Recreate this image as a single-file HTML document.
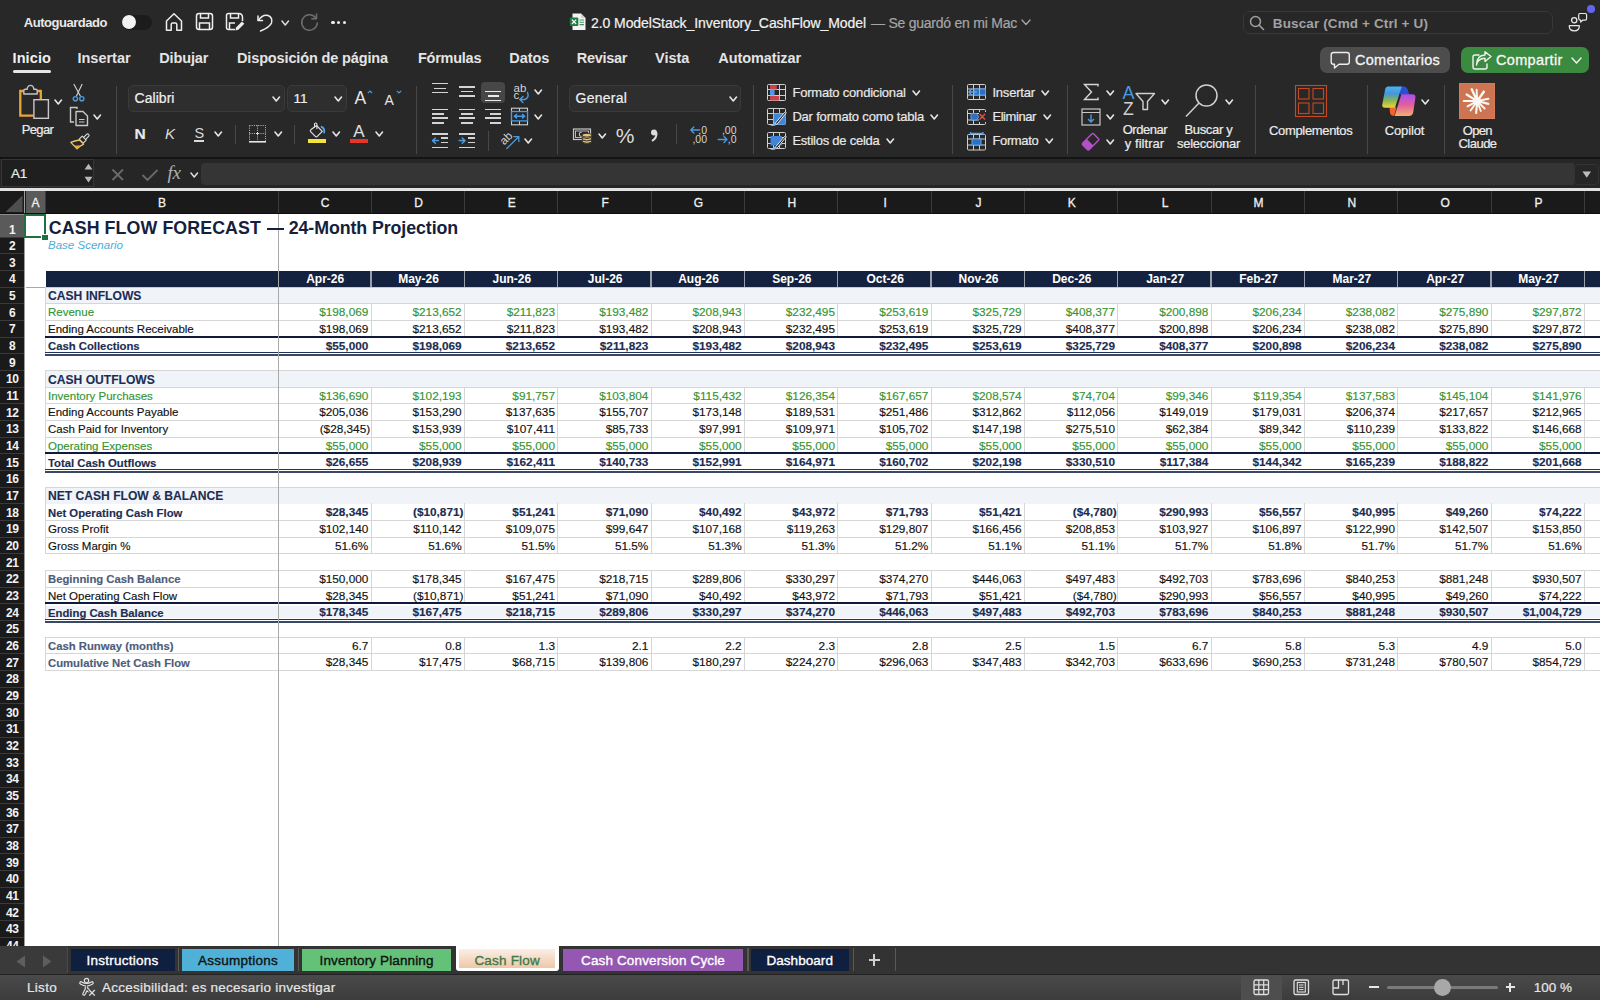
<!DOCTYPE html>
<html><head><meta charset="utf-8"><style>
html,body{margin:0;padding:0;width:1600px;height:1000px;overflow:hidden;background:#282828;}
body{position:relative;font-family:"Liberation Sans",sans-serif;}
.t{position:absolute;white-space:nowrap;font-family:"Liberation Sans",sans-serif;}
.r{position:absolute;}
.s{position:absolute;overflow:visible;}
</style></head><body>
<div class="r" style="left:0px;top:0px;width:1600px;height:157px;background:#282828;"></div>
<div class="t " style="top:16.00px;font-size:13px;line-height:13px;color:#e8e8e8;font-weight:bold;letter-spacing:-0.464px;left:23.75px;">Autoguardado</div>
<div class="r" style="left:122px;top:15px;width:30px;height:14.5px;background:#1c1c1c;border-radius:8px;"></div>
<div class="r" style="left:122.3px;top:15.2px;width:14px;height:14px;background:#f2f2f2;border-radius:50%;box-shadow:0 0 1px #000;"></div>
<svg class="s" style="left:164px;top:12px" width="20" height="20" viewBox="0 0 20 20"><path d="M2.5 18.2 V9 L10 1.8 L17.5 9 V18.2 H12.8 V12.5 Q12.8 11 11.3 11 H8.7 Q7.2 11 7.2 12.5 V18.2 Z" fill="none" stroke="#eee" stroke-width="1.5" stroke-linejoin="round"/></svg>
<svg class="s" style="left:195px;top:12px" width="19" height="19" viewBox="0 0 19 19"><rect x="1.5" y="1.5" width="16" height="16" rx="2.5" fill="none" stroke="#eee" stroke-width="1.5"/><path d="M5.5 1.8 V6 H13.5 V1.8" fill="none" stroke="#eee" stroke-width="1.5"/><path d="M4.5 17.2 V11 H14.5 V17.2" fill="none" stroke="#eee" stroke-width="1.5"/></svg>
<svg class="s" style="left:225px;top:12px" width="20" height="20" viewBox="0 0 20 20"><path d="M10 17.5 H3.5 Q1.5 17.5 1.5 15.5 V3.5 Q1.5 1.5 3.5 1.5 H13.5 Q17.5 1.5 17.5 5.5 V9" fill="none" stroke="#eee" stroke-width="1.5"/><path d="M5.5 1.8 V6 H13.5 V1.8" fill="none" stroke="#eee" stroke-width="1.5"/><path d="M4.5 17.2 V11 H10" fill="none" stroke="#eee" stroke-width="1.5"/><path d="M10.5 18.5 L11 15.5 L17 9.5 L19.3 11.8 L13.3 17.8 Z" fill="#eee"/></svg>
<svg class="s" style="left:256px;top:12px" width="18" height="20" viewBox="0 0 18 20"><path d="M2 4 V8.5 H6.5" fill="none" stroke="#eee" stroke-width="1.5" stroke-linecap="round" stroke-linejoin="round"/><path d="M2.3 8.2 Q7 2 12 3.5 Q17 5.5 15.5 11 Q14 15 4.5 19" fill="none" stroke="#eee" stroke-width="1.5" stroke-linecap="round"/></svg>
<svg class="s" style="left:281.25px;top:19.5px" width="8.5" height="6" viewBox="0 0 8.5 6"><path d="M1 1 L4.25 5 L7.5 1" fill="none" stroke="#ddd" stroke-width="1.5" stroke-linecap="round" stroke-linejoin="round"/></svg>
<svg class="s" style="left:299.5px;top:12.5px" width="19" height="19" viewBox="0 0 19 19"><path d="M15.5 4.5 A7.8 7.8 0 1 0 17.3 10" fill="none" stroke="#6e6e6e" stroke-width="1.5" stroke-linecap="round"/><path d="M16.5 1 V5.8 H11.8" fill="none" stroke="#6e6e6e" stroke-width="1.5" stroke-linecap="round" stroke-linejoin="round"/></svg>
<div class="r" style="left:331.4px;top:20.7px;width:3.2px;height:3.2px;background:#eee;border-radius:50%;"></div>
<div class="r" style="left:337.2px;top:20.7px;width:3.2px;height:3.2px;background:#eee;border-radius:50%;"></div>
<div class="r" style="left:343.0px;top:20.7px;width:3.2px;height:3.2px;background:#eee;border-radius:50%;"></div>
<svg class="s" style="left:569px;top:13px" width="18" height="18" viewBox="0 0 18 18"><path d="M3.5 0.5 H12 L16.5 5 V17 H3.5 Z" fill="#f4f4f4"/><path d="M12 0.5 V5 H16.5" fill="#d0d0d0"/><rect x="0.8" y="4.5" width="8.5" height="8.5" rx="1" fill="#1f7a45"/><path d="M2.9 6.6 L7.2 11 M7.2 6.6 L2.9 11" stroke="#fff" stroke-width="1.2"/><path d="M10.5 7 H15 M10.5 9.3 H15 M10.5 11.6 H15" stroke="#3c9a5e" stroke-width="1.1"/></svg>
<div class="t " style="top:15.55px;font-size:14px;line-height:14px;color:#f2f2f2;letter-spacing:-0.072px;-webkit-text-stroke:0.2px #f2f2f2;left:591.00px;">2.0 ModelStack_Inventory_CashFlow_Model</div>
<div class="t " style="top:15.55px;font-size:14px;line-height:14px;color:#a6a6a6;letter-spacing:-0.236px;-webkit-text-stroke:0.2px #a6a6a6;left:871.00px;">— Se guardó en mi Mac</div>
<svg class="s" style="left:1020.5px;top:18.75px" width="10" height="6.5" viewBox="0 0 10 6.5"><path d="M1 1 L5.0 5.5 L9 1" fill="none" stroke="#a6a6a6" stroke-width="1.3" stroke-linecap="round" stroke-linejoin="round"/></svg>
<div class="r" style="left:1242.5px;top:10.5px;width:310.5px;height:23px;background:#272727;border:1px solid #393939;border-radius:7px;box-sizing:border-box;"></div>
<svg class="s" style="left:1249px;top:15px" width="16" height="16" viewBox="0 0 16 16"><circle cx="6.5" cy="6.5" r="5" fill="none" stroke="#a0a0a0" stroke-width="1.5"/><path d="M10.2 10.2 L14.5 14.5" stroke="#a0a0a0" stroke-width="1.6" stroke-linecap="round"/></svg>
<div class="t " style="top:16.77px;font-size:13.5px;line-height:13.5px;color:#a2a2a2;font-weight:bold;letter-spacing:0.127px;left:1272.80px;">Buscar (Cmd + Ctrl + U)</div>
<svg class="s" style="left:1568px;top:11px" width="22" height="22" viewBox="0 0 22 22"><circle cx="6.2" cy="9.2" r="2.6" fill="none" stroke="#e8e8e8" stroke-width="1.3"/><path d="M1.3 14.6 H11.3 Q11.6 19.8 6.3 19.9 Q1 19.8 1.3 14.6 Z" fill="none" stroke="#e8e8e8" stroke-width="1.3" stroke-linejoin="round"/><path d="M11.8 2.5 H17.2 Q18.6 2.5 18.6 4 V7.6 Q18.6 9.2 17.2 9.2 H14.6 L12.7 11 L12.6 9.2 Q10.7 9.2 10.7 7.6 V4 Q10.7 2.5 11.8 2.5 Z" fill="none" stroke="#e8e8e8" stroke-width="1.2" stroke-linejoin="round"/></svg>
<div class="r" style="left:1587.2px;top:5px;width:7.6px;height:7.6px;background:#6464ee;border-radius:50%;"></div>
<div class="t " style="top:50.73px;font-size:14.5px;line-height:14.5px;color:#f0f0f0;font-weight:bold;letter-spacing:0.106px;left:12.50px;">Inicio</div>
<div class="t " style="top:50.73px;font-size:14.5px;line-height:14.5px;color:#e4e4e4;font-weight:bold;letter-spacing:-0.012px;left:77.50px;">Insertar</div>
<div class="t " style="top:50.73px;font-size:14.5px;line-height:14.5px;color:#e4e4e4;font-weight:bold;letter-spacing:-0.136px;left:159.25px;">Dibujar</div>
<div class="t " style="top:50.73px;font-size:14.5px;line-height:14.5px;color:#e4e4e4;font-weight:bold;letter-spacing:-0.137px;left:237.00px;">Disposición de página</div>
<div class="t " style="top:50.73px;font-size:14.5px;line-height:14.5px;color:#e4e4e4;font-weight:bold;letter-spacing:-0.252px;left:418.00px;">Fórmulas</div>
<div class="t " style="top:50.73px;font-size:14.5px;line-height:14.5px;color:#e4e4e4;font-weight:bold;letter-spacing:-0.057px;left:509.25px;">Datos</div>
<div class="t " style="top:50.73px;font-size:14.5px;line-height:14.5px;color:#e4e4e4;font-weight:bold;letter-spacing:-0.307px;left:576.75px;">Revisar</div>
<div class="t " style="top:50.73px;font-size:14.5px;line-height:14.5px;color:#e4e4e4;font-weight:bold;letter-spacing:-0.029px;left:655.00px;">Vista</div>
<div class="t " style="top:50.73px;font-size:14.5px;line-height:14.5px;color:#e4e4e4;font-weight:bold;letter-spacing:-0.094px;left:718.25px;">Automatizar</div>
<div class="r" style="left:12.5px;top:70px;width:38.5px;height:3px;background:#e6e6e6;border-radius:2px;"></div>
<div class="r" style="left:1320px;top:46.6px;width:129.7px;height:26.8px;background:#4d4d4d;border-radius:7px;"></div>
<svg class="s" style="left:1330px;top:51px" width="21" height="19" viewBox="0 0 21 19"><path d="M3.5 1.5 H17 Q19.3 1.5 19.3 3.8 V11 Q19.3 13.3 17 13.3 H9 L4.5 17 V13.3 H3.5 Q1.2 13.3 1.2 11 V3.8 Q1.2 1.5 3.5 1.5 Z" fill="none" stroke="#eee" stroke-width="1.4" stroke-linejoin="round"/></svg>
<div class="t " style="top:53.03px;font-size:14.5px;line-height:14.5px;color:#f4f4f4;letter-spacing:0.255px;-webkit-text-stroke:0.3px #f4f4f4;left:1355.00px;">Comentarios</div>
<div class="r" style="left:1461px;top:46.6px;width:128px;height:26.8px;background:#3a8a40;border-radius:7px;"></div>
<svg class="s" style="left:1471px;top:50.5px" width="22" height="20" viewBox="0 0 22 20"><path d="M8 4 H4 Q2 4 2 6 V16 Q2 18 4 18 H14 Q16 18 16 16 V13" fill="none" stroke="#f2f2f2" stroke-width="1.4" stroke-linecap="round"/><path d="M5.5 14 Q6.5 7.5 14 7.2 V10.5 L20 5.5 L14 0.8 V4 Q5.5 4.5 5.5 14 Z" fill="none" stroke="#f2f2f2" stroke-width="1.4" stroke-linejoin="round"/></svg>
<div class="t " style="top:53.03px;font-size:14.5px;line-height:14.5px;color:#f8f8f8;letter-spacing:0.328px;-webkit-text-stroke:0.3px #f8f8f8;left:1496.00px;">Compartir</div>
<svg class="s" style="left:1571.0px;top:57.0px" width="11" height="7" viewBox="0 0 11 7"><path d="M1 1 L5.5 6 L10 1" fill="none" stroke="#f2f2f2" stroke-width="1.4" stroke-linecap="round" stroke-linejoin="round"/></svg>
<svg class="s" style="left:17px;top:84px" width="36" height="37" viewBox="0 0 36 37"><path d="M6.8 7 H3.3 V31.6 H16.5" fill="none" stroke="#eaa53a" stroke-width="2.3"/><path d="M20.5 7 H23.8 V15.5" fill="none" stroke="#eaa53a" stroke-width="2.3"/><path d="M6.8 10 V6.6 Q6.8 5.3 8.2 5.3 H10.2 Q10.5 1.4 13.5 1.4 Q16.5 1.4 16.8 5.3 H18.8 Q20.2 5.3 20.2 6.6 V10 Z" fill="#282828" stroke="#c4c4c4" stroke-width="1.4" stroke-linejoin="round"/><rect x="16.9" y="15.7" width="14.5" height="18.6" fill="#282828" stroke="#c8c8c8" stroke-width="1.4"/></svg>
<svg class="s" style="left:53.75px;top:98.5px" width="8.5" height="6" viewBox="0 0 8.5 6"><path d="M1 1 L4.25 5 L7.5 1" fill="none" stroke="#e6e6e6" stroke-width="1.6" stroke-linecap="round" stroke-linejoin="round"/></svg>
<div class="t " style="top:123.00px;font-size:13px;line-height:13px;color:#ececec;letter-spacing:-0.638px;-webkit-text-stroke:0.2px #ececec;left:21.70px;">Pegar</div>
<svg class="s" style="left:71px;top:83px" width="16" height="20" viewBox="0 0 16 20"><path d="M2.8 1 L9.6 13.6 M11.2 1 L5.2 13.6" stroke="#d4d4d4" stroke-width="1.1"/><circle cx="4.4" cy="15.7" r="2.1" fill="#282828" stroke="#4a9be0" stroke-width="1.4"/><circle cx="10.8" cy="15.7" r="2.1" fill="#282828" stroke="#4a9be0" stroke-width="1.4"/></svg>
<svg class="s" style="left:69px;top:106px" width="20" height="21" viewBox="0 0 20 21"><path d="M8 3 V1.5 H1.5 V16 H5" fill="none" stroke="#c8c8c8" stroke-width="1.4"/><path d="M7 5.5 H14 L18.5 10 V19.5 H7 Z" fill="none" stroke="#c8c8c8" stroke-width="1.4" stroke-linejoin="round"/><path d="M10 13.5 H15.5 M10 16 H15.5" stroke="#c8c8c8" stroke-width="1.2"/></svg>
<svg class="s" style="left:93.45px;top:114.3px" width="8.5" height="6" viewBox="0 0 8.5 6"><path d="M1 1 L4.25 5 L7.5 1" fill="none" stroke="#e6e6e6" stroke-width="1.6" stroke-linecap="round" stroke-linejoin="round"/></svg>
<svg class="s" style="left:69px;top:131px" width="22" height="20" viewBox="0 0 22 20"><path d="M13.2 7.8 L17.6 3.4 Q18.6 2.4 19.6 3.4 Q20.6 4.4 19.6 5.4 L15.2 9.8" fill="none" stroke="#d8d8d8" stroke-width="1.2"/><path d="M10.2 8.2 L13.2 5.2 L17.2 9.2 L14.2 12.2 Z" fill="#282828" stroke="#d8d8d8" stroke-width="1.2" stroke-linejoin="round"/><path d="M10.5 9 Q5.5 9.8 1.8 11.4 L8 17.8 Q10.5 15.2 14.6 13.1 Z" fill="#282828" stroke="#f0c468" stroke-width="1.3" stroke-linejoin="round"/><path d="M4.8 14.5 L8 17.8 Q10 15.6 12.2 14.4 Z" fill="#e9a43c"/></svg>
<div class="r" style="left:116px;top:85.5px;width:1px;height:68.5px;background:#484848;"></div>
<div class="r" style="left:127.9px;top:85.3px;width:156.8px;height:26.8px;background:#2e2e2e;border:1px solid #3a3a3a;border-radius:5px;box-sizing:border-box;"></div>
<div class="t " style="top:91.15px;font-size:14px;line-height:14px;color:#f0f0f0;letter-spacing:0.046px;-webkit-text-stroke:0.2px #f0f0f0;left:134.50px;">Calibri</div>
<svg class="s" style="left:271.95px;top:96.0px" width="8.5" height="6" viewBox="0 0 8.5 6"><path d="M1 1 L4.25 5 L7.5 1" fill="none" stroke="#e6e6e6" stroke-width="1.6" stroke-linecap="round" stroke-linejoin="round"/></svg>
<div class="r" style="left:286.6px;top:85.3px;width:60.4px;height:26.8px;background:#2e2e2e;border:1px solid #3a3a3a;border-radius:5px;box-sizing:border-box;"></div>
<div class="t " style="top:91.57px;font-size:13.5px;line-height:13.5px;color:#f0f0f0;-webkit-text-stroke:0.2px #f0f0f0;left:293.50px;">11</div>
<svg class="s" style="left:334.25px;top:96.0px" width="8.5" height="6" viewBox="0 0 8.5 6"><path d="M1 1 L4.25 5 L7.5 1" fill="none" stroke="#e6e6e6" stroke-width="1.6" stroke-linecap="round" stroke-linejoin="round"/></svg>
<div class="t " style="top:89.79px;font-size:17.5px;line-height:17.5px;color:#e6e6e6;left:354.50px;">A</div>
<svg class="s" style="left:367px;top:90px" width="6" height="4" viewBox="0 0 6 4"><path d="M0.8 3.2 L3 1 L5.2 3.2" fill="none" stroke="#4a9be0" stroke-width="1.2"/></svg>
<div class="t " style="top:92.75px;font-size:14px;line-height:14px;color:#e6e6e6;left:384.50px;">A</div>
<svg class="s" style="left:396px;top:90px" width="6" height="4" viewBox="0 0 6 4"><path d="M0.8 0.8 L3 3 L5.2 0.8" fill="none" stroke="#4a9be0" stroke-width="1.2"/></svg>
<div class="t " style="top:125.58px;font-size:15.5px;line-height:15.5px;color:#e8e8e8;font-weight:bold;-webkit-text-stroke:0.2px #e8e8e8;left:134.50px;">N</div>
<div class="t " style="top:126.00px;font-size:15px;line-height:15px;color:#dadada;font-style:italic;left:165.00px;">K</div>
<div class="t " style="top:126.43px;font-size:14.5px;line-height:14.5px;color:#dadada;left:194.50px;">S</div>
<div class="r" style="left:194px;top:140.3px;width:9.5px;height:1.3px;background:#dadada;"></div>
<svg class="s" style="left:214.25px;top:131.3px" width="8.5" height="6" viewBox="0 0 8.5 6"><path d="M1 1 L4.25 5 L7.5 1" fill="none" stroke="#e6e6e6" stroke-width="1.6" stroke-linecap="round" stroke-linejoin="round"/></svg>
<div class="r" style="left:234.8px;top:124.5px;width:1px;height:19.5px;background:#484848;"></div>
<svg class="s" style="left:248px;top:124px" width="19" height="19" viewBox="0 0 19 19"><path d="M1.5 1.5 H17.5 V17.5 M1.5 1.5 V17.5 M9.5 1.5 V17.5 M1.5 9.5 H17.5" fill="none" stroke="#bdbdbd" stroke-width="1" stroke-dasharray="1 1.2"/><path d="M8 9.5 H11 M9.5 8 V11" stroke="#e0e0e0" stroke-width="1"/><path d="M1 17.8 H18" stroke="#e6e6e6" stroke-width="1.6"/></svg>
<svg class="s" style="left:273.75px;top:131.3px" width="8.5" height="6" viewBox="0 0 8.5 6"><path d="M1 1 L4.25 5 L7.5 1" fill="none" stroke="#e6e6e6" stroke-width="1.6" stroke-linecap="round" stroke-linejoin="round"/></svg>
<div class="r" style="left:294px;top:124.5px;width:1px;height:19.5px;background:#484848;"></div>
<svg class="s" style="left:307px;top:122px" width="20" height="17" viewBox="0 0 20 17"><path d="M9.5 3.5 L15.3 9.3 L10.3 14.3 Q9.3 15.3 8.3 14.3 L3.8 9.8 Q2.8 8.8 3.8 7.8 Z" fill="none" stroke="#e0e0e0" stroke-width="1.2" stroke-linejoin="round"/><path d="M7.5 5.5 V2.2 Q7.5 1 8.7 1 Q9.9 1 9.9 2.2 V7" fill="none" stroke="#e0e0e0" stroke-width="1.1"/><path d="M14.6 4.8 Q17.8 6 17.2 10.5" fill="none" stroke="#5aa5f0" stroke-width="1.8" stroke-linecap="round"/></svg>
<div class="r" style="left:307.6px;top:138.8px;width:18.4px;height:4.2px;background:#f4e33a;"></div>
<svg class="s" style="left:332.25px;top:131.3px" width="8.5" height="6" viewBox="0 0 8.5 6"><path d="M1 1 L4.25 5 L7.5 1" fill="none" stroke="#e6e6e6" stroke-width="1.6" stroke-linecap="round" stroke-linejoin="round"/></svg>
<div class="t " style="top:123.41px;font-size:17px;line-height:17px;color:#e0e0e0;left:353.20px;">A</div>
<div class="r" style="left:350.4px;top:138.8px;width:17.6px;height:4.2px;background:#e53628;"></div>
<svg class="s" style="left:374.75px;top:131.3px" width="8.5" height="6" viewBox="0 0 8.5 6"><path d="M1 1 L4.25 5 L7.5 1" fill="none" stroke="#e6e6e6" stroke-width="1.6" stroke-linecap="round" stroke-linejoin="round"/></svg>
<div class="r" style="left:416px;top:86px;width:1px;height:68px;background:#484848;"></div>
<div class="r" style="left:431.8px;top:82.95px;width:16.2px;height:1.5px;background:#d4d4d4;"></div>
<div class="r" style="left:434.4px;top:87.55px;width:11.4px;height:1.5px;background:#d4d4d4;"></div>
<div class="r" style="left:431.8px;top:91.95px;width:16.2px;height:1.5px;background:#d4d4d4;"></div>
<div class="r" style="left:458.9px;top:86.45px;width:15.8px;height:1.5px;background:#d4d4d4;"></div>
<div class="r" style="left:461px;top:90.85px;width:11.5px;height:1.5px;background:#d4d4d4;"></div>
<div class="r" style="left:458.9px;top:95.35px;width:15.8px;height:1.5px;background:#d4d4d4;"></div>
<div class="r" style="left:481.2px;top:81.5px;width:24.1px;height:21.9px;background:#474747;border-radius:4px;"></div>
<div class="r" style="left:485.2px;top:90.85px;width:16.2px;height:1.5px;background:#ececec;"></div>
<div class="r" style="left:487.8px;top:95.35px;width:11.4px;height:1.5px;background:#ececec;"></div>
<div class="r" style="left:485.2px;top:99.75px;width:16.2px;height:1.5px;background:#ececec;"></div>
<div class="t " style="top:82.77px;font-size:11.5px;line-height:11.5px;color:#d6d6d6;letter-spacing:0.104px;left:513.50px;">ab</div>
<div class="t " style="top:90.27px;font-size:11.5px;line-height:11.5px;color:#d6d6d6;left:513.50px;">c</div>
<svg class="s" style="left:518px;top:91px" width="12" height="13" viewBox="0 0 12 13"><path d="M9.5 1.5 Q11.5 6.5 7 8.5 H2 M5 5.5 L1.8 8.5 L5 11.5" fill="none" stroke="#4a9be0" stroke-width="1.4" stroke-linecap="round"/></svg>
<svg class="s" style="left:534.25px;top:89.4px" width="8.5" height="6" viewBox="0 0 8.5 6"><path d="M1 1 L4.25 5 L7.5 1" fill="none" stroke="#e6e6e6" stroke-width="1.6" stroke-linecap="round" stroke-linejoin="round"/></svg>
<div class="r" style="left:431.8px;top:108.55px;width:16.2px;height:1.5px;background:#d4d4d4;"></div>
<div class="r" style="left:458.9px;top:108.55px;width:15.8px;height:1.5px;background:#d4d4d4;"></div>
<div class="r" style="left:485.2px;top:108.55px;width:16.2px;height:1.5px;background:#d4d4d4;"></div>
<div class="r" style="left:431.8px;top:113.15px;width:11.8px;height:1.5px;background:#d4d4d4;"></div>
<div class="r" style="left:461px;top:113.15px;width:11.5px;height:1.5px;background:#d4d4d4;"></div>
<div class="r" style="left:490px;top:113.15px;width:11.4px;height:1.5px;background:#d4d4d4;"></div>
<div class="r" style="left:431.8px;top:117.45px;width:16.2px;height:1.5px;background:#d4d4d4;"></div>
<div class="r" style="left:458.9px;top:117.45px;width:15.8px;height:1.5px;background:#d4d4d4;"></div>
<div class="r" style="left:485.2px;top:117.45px;width:16.2px;height:1.5px;background:#d4d4d4;"></div>
<div class="r" style="left:431.8px;top:122.05px;width:11.8px;height:1.5px;background:#d4d4d4;"></div>
<div class="r" style="left:461px;top:122.05px;width:11.5px;height:1.5px;background:#d4d4d4;"></div>
<div class="r" style="left:490px;top:122.05px;width:11.4px;height:1.5px;background:#d4d4d4;"></div>
<svg class="s" style="left:510px;top:107px" width="20" height="19" viewBox="0 0 20 19"><rect x="1.5" y="1.2" width="16" height="16.6" fill="none" stroke="#cfcfcf" stroke-width="1.1"/><path d="M9.5 1.2 V4.5 M9.5 13.9 V17.8" stroke="#cfcfcf" stroke-width="1"/><rect x="1.5" y="4.5" width="16" height="9.4" fill="#282828" stroke="#4a9be0" stroke-width="1.3"/><path d="M4.5 9.2 H14.5 M7 7 L4.3 9.2 L7 11.4 M12 7 L14.7 9.2 L12 11.4" fill="none" stroke="#4a9be0" stroke-width="1.4" stroke-linejoin="round"/></svg>
<svg class="s" style="left:534.25px;top:114.0px" width="8.5" height="6" viewBox="0 0 8.5 6"><path d="M1 1 L4.25 5 L7.5 1" fill="none" stroke="#e6e6e6" stroke-width="1.6" stroke-linecap="round" stroke-linejoin="round"/></svg>
<div class="r" style="left:431.8px;top:133.05px;width:16.2px;height:1.5px;background:#d4d4d4;"></div>
<div class="r" style="left:441px;top:137.45px;width:7px;height:1.5px;background:#d4d4d4;"></div>
<div class="r" style="left:441px;top:141.95px;width:7px;height:1.5px;background:#d4d4d4;"></div>
<div class="r" style="left:431.8px;top:146.55px;width:16.2px;height:1.5px;background:#d4d4d4;"></div>
<div class="r" style="left:458.9px;top:133.05px;width:16.2px;height:1.5px;background:#d4d4d4;"></div>
<div class="r" style="left:468px;top:137.45px;width:6.7px;height:1.5px;background:#d4d4d4;"></div>
<div class="r" style="left:468px;top:141.95px;width:6.7px;height:1.5px;background:#d4d4d4;"></div>
<div class="r" style="left:458.9px;top:146.55px;width:16.2px;height:1.5px;background:#d4d4d4;"></div>
<svg class="s" style="left:431px;top:136px" width="9" height="9" viewBox="0 0 9 9"><path d="M7.5 4.6 H1.8 M4.4 2 L1.6 4.6 L4.4 7.2" fill="none" stroke="#4a9be0" stroke-width="1.5" stroke-linecap="round" stroke-linejoin="round"/></svg>
<svg class="s" style="left:458px;top:136px" width="9" height="9" viewBox="0 0 9 9"><path d="M1.2 4.6 H6.8 M4.2 2 L7 4.6 L4.2 7.2" fill="none" stroke="#4a9be0" stroke-width="1.5" stroke-linecap="round" stroke-linejoin="round"/></svg>
<div class="r" style="left:488px;top:131px;width:1px;height:19.5px;background:#484848;"></div>
<svg class="s" style="left:498px;top:128px" width="24" height="23" viewBox="0 0 24 23"><text x="0" y="0" transform="translate(6.2,17.5) rotate(-45)" font-family="Liberation Sans" font-size="11.5" fill="#d6d6d6">ab</text><path d="M8.8 20.5 L20.6 8.7 M15.8 8.6 H20.8 V13.6" fill="none" stroke="#4a9be0" stroke-width="1.3" stroke-linecap="round"/></svg>
<svg class="s" style="left:524.25px;top:138.0px" width="8.5" height="6" viewBox="0 0 8.5 6"><path d="M1 1 L4.25 5 L7.5 1" fill="none" stroke="#e6e6e6" stroke-width="1.6" stroke-linecap="round" stroke-linejoin="round"/></svg>
<div class="r" style="left:557px;top:85px;width:1px;height:69px;background:#484848;"></div>
<div class="r" style="left:569px;top:84.8px;width:172px;height:27.4px;background:#2e2e2e;border:1px solid #3a3a3a;border-radius:5px;box-sizing:border-box;"></div>
<div class="t " style="top:91.15px;font-size:14px;line-height:14px;color:#f0f0f0;letter-spacing:0.242px;-webkit-text-stroke:0.2px #f0f0f0;left:575.60px;">General</div>
<svg class="s" style="left:728.55px;top:95.5px" width="8.5" height="6" viewBox="0 0 8.5 6"><path d="M1 1 L4.25 5 L7.5 1" fill="none" stroke="#e6e6e6" stroke-width="1.6" stroke-linecap="round" stroke-linejoin="round"/></svg>
<svg class="s" style="left:572px;top:127px" width="22" height="18" viewBox="0 0 22 18"><rect x="1.5" y="2" width="17" height="10.5" fill="none" stroke="#c8c8c8" stroke-width="1.2"/><rect x="3.5" y="4" width="13" height="6.5" fill="none" stroke="#c8c8c8" stroke-width="0.9"/><path d="M9.8 5.3 Q7.3 5 7.3 7.3 Q7.3 9.4 9.8 9.2" fill="none" stroke="#c8c8c8" stroke-width="1.1"/><g stroke="#282828" stroke-width="0.9" fill="#e8c270"><path d="M10.2 13.2 V15.2 Q14.8 17.6 19.6 15.2 V13.2 Z"/><path d="M10.2 10.6 V12.8 Q14.8 15.2 19.6 12.8 V10.6 Z"/><path d="M10.2 8.2 V10.4 Q14.8 12.8 19.6 10.4 V8.2 Z"/><ellipse cx="14.9" cy="8.2" rx="4.7" ry="1.9"/></g></svg>
<svg class="s" style="left:598.25px;top:132.5px" width="8.5" height="6" viewBox="0 0 8.5 6"><path d="M1 1 L4.25 5 L7.5 1" fill="none" stroke="#e6e6e6" stroke-width="1.6" stroke-linecap="round" stroke-linejoin="round"/></svg>
<div class="t " style="top:125.02px;font-size:21px;line-height:21px;color:#dcdcdc;left:615.70px;">%</div>
<svg class="s" style="left:648.5px;top:128px" width="11" height="15" viewBox="0 0 11 15"><circle cx="5" cy="4.5" r="3" fill="#dcdcdc"/><path d="M7.5 4.5 Q8 10 3 13" fill="none" stroke="#dcdcdc" stroke-width="2"/></svg>
<div class="r" style="left:676px;top:124px;width:1px;height:20px;background:#484848;"></div>
<svg class="s" style="left:688.5px;top:125px" width="14" height="11" viewBox="0 0 14 11"><path d="M10.5 5 H1.8 M4.8 2 L1.8 5 L4.8 8" fill="none" stroke="#4a9be0" stroke-width="1.3" stroke-linecap="round" stroke-linejoin="round"/></svg>
<div class="t " style="top:124.61px;font-size:10.5px;line-height:10.5px;color:#d4d4d4;right:893.00px;">,0</div>
<div class="t " style="top:133.91px;font-size:10.5px;line-height:10.5px;color:#d4d4d4;right:893.00px;">,00</div>
<div class="t " style="top:124.61px;font-size:10.5px;line-height:10.5px;color:#d4d4d4;right:863.50px;">,00</div>
<svg class="s" style="left:717px;top:133.5px" width="13" height="11" viewBox="0 0 13 11"><path d="M1.2 5.5 H10 M7 2.5 L10 5.5 L7 8.5" fill="none" stroke="#4a9be0" stroke-width="1.3" stroke-linecap="round" stroke-linejoin="round"/></svg>
<div class="t " style="top:133.91px;font-size:10.5px;line-height:10.5px;color:#d4d4d4;right:863.50px;">,0</div>
<div class="r" style="left:752.9px;top:85px;width:1px;height:69px;background:#484848;"></div>
<svg class="s" style="left:767px;top:84px" width="20" height="19" viewBox="0 0 20 19"><rect x="0.5" y="0.5" width="18" height="16.0" rx="1" fill="none" stroke="#cfcfcf" stroke-width="1"/><path d="M6.5 0.5 V16.5 M12.5 0.5 V16.5 M0.5 5.5 H18.5 M0.5 11.5 H18.5" stroke="#cfcfcf" stroke-width="1"/><rect x="3" y="1" width="6.8" height="4.5" fill="#c9444a"/><rect x="3" y="6" width="4.6" height="5.5" fill="#4a9be0"/><rect x="3" y="12" width="9.2" height="4.5" fill="#c9444a"/></svg>
<div class="t " style="top:85.60px;font-size:13px;line-height:13px;color:#e8e8e8;letter-spacing:-0.203px;-webkit-text-stroke:0.2px #e8e8e8;left:792.40px;">Formato condicional</div>
<svg class="s" style="left:912.05px;top:89.5px" width="8.5" height="6" viewBox="0 0 8.5 6"><path d="M1 1 L4.25 5 L7.5 1" fill="none" stroke="#e6e6e6" stroke-width="1.6" stroke-linecap="round" stroke-linejoin="round"/></svg>
<svg class="s" style="left:767px;top:108px" width="20" height="19" viewBox="0 0 20 19"><rect x="0.5" y="0.5" width="18" height="16.0" rx="1" fill="none" stroke="#cfcfcf" stroke-width="1"/><path d="M6.5 0.5 V16.5 M12.5 0.5 V16.5 M0.5 5.5 H18.5 M0.5 11.5 H18.5" stroke="#cfcfcf" stroke-width="1"/><rect x="6.7" y="5.5" width="12" height="11.2" fill="#3f86d8"/><path d="M8 15.5 L17.5 4.5 Q18.8 3.5 19.3 4.8 L10 16.3 Z" fill="#282828" stroke="#e6e6e6" stroke-width="1"/><path d="M3 17.5 Q5.5 17.5 7.5 14.5 L9.5 16.5 Q7 19 3 17.5 Z" fill="#78b8f0"/></svg>
<div class="t " style="top:110.00px;font-size:13px;line-height:13px;color:#e8e8e8;letter-spacing:-0.192px;-webkit-text-stroke:0.2px #e8e8e8;left:792.40px;">Dar formato como tabla</div>
<svg class="s" style="left:930.25px;top:113.8px" width="8.5" height="6" viewBox="0 0 8.5 6"><path d="M1 1 L4.25 5 L7.5 1" fill="none" stroke="#e6e6e6" stroke-width="1.6" stroke-linecap="round" stroke-linejoin="round"/></svg>
<svg class="s" style="left:767px;top:132px" width="20" height="19" viewBox="0 0 20 19"><rect x="0.5" y="0.5" width="18" height="16.0" rx="1" fill="none" stroke="#cfcfcf" stroke-width="1"/><path d="M6.5 0.5 V16.5 M12.5 0.5 V16.5 M0.5 5.5 H18.5 M0.5 11.5 H18.5" stroke="#cfcfcf" stroke-width="1"/><rect x="3.5" y="4" width="11.5" height="9.5" fill="#3f86d8"/><path d="M8 15.5 L17.5 4.5 Q18.8 3.5 19.3 4.8 L10 16.3 Z" fill="#282828" stroke="#e6e6e6" stroke-width="1"/><path d="M3 17.5 Q5.5 17.5 7.5 14.5 L9.5 16.5 Q7 19 3 17.5 Z" fill="#78b8f0"/></svg>
<div class="t " style="top:134.40px;font-size:13px;line-height:13px;color:#e8e8e8;letter-spacing:-0.241px;-webkit-text-stroke:0.2px #e8e8e8;left:792.40px;">Estilos de celda</div>
<svg class="s" style="left:886.25px;top:138.3px" width="8.5" height="6" viewBox="0 0 8.5 6"><path d="M1 1 L4.25 5 L7.5 1" fill="none" stroke="#e6e6e6" stroke-width="1.6" stroke-linecap="round" stroke-linejoin="round"/></svg>
<div class="r" style="left:952.4px;top:85px;width:1px;height:69px;background:#484848;"></div>
<svg class="s" style="left:967px;top:84px" width="20" height="19" viewBox="0 0 20 19"><rect x="0.5" y="0.5" width="18" height="15.0" rx="1" fill="none" stroke="#cfcfcf" stroke-width="1"/><path d="M6.5 0.5 V15.5 M12.5 0.5 V15.5 M0.5 5 H18.5 M0.5 11 H18.5" stroke="#cfcfcf" stroke-width="1"/><rect x="7" y="5" width="11.5" height="6" fill="#2f6fc0" stroke="#5aa5f0" stroke-width="1"/><path d="M12.5 5 V11" stroke="#9cc8f5" stroke-width="0.8"/><path d="M9.5 8 H1.8 M4.6 5.2 L1.8 8 L4.6 10.8" fill="none" stroke="#5aa5f0" stroke-width="1.3" stroke-linecap="round" stroke-linejoin="round"/></svg>
<div class="t " style="top:85.60px;font-size:13px;line-height:13px;color:#e8e8e8;letter-spacing:-0.184px;-webkit-text-stroke:0.2px #e8e8e8;left:992.40px;">Insertar</div>
<svg class="s" style="left:1041.25px;top:89.5px" width="8.5" height="6" viewBox="0 0 8.5 6"><path d="M1 1 L4.25 5 L7.5 1" fill="none" stroke="#e6e6e6" stroke-width="1.6" stroke-linecap="round" stroke-linejoin="round"/></svg>
<svg class="s" style="left:967px;top:109px" width="20" height="19" viewBox="0 0 20 19"><rect x="0.5" y="0.5" width="18" height="15.0" rx="1" fill="none" stroke="#cfcfcf" stroke-width="1"/><path d="M6.5 0.5 V15.5 M12.5 0.5 V15.5 M0.5 4.5 H18.5 M0.5 11 H18.5" stroke="#cfcfcf" stroke-width="1"/><rect x="12" y="3" width="7.5" height="10" fill="#282828"/><path d="M4 4.5 H9.5 L11.8 7.8 L9.5 11 H4 Z" fill="#2f6fc0" stroke="#5aa5f0" stroke-width="1"/><path d="M12.5 5 L18 10.5 M18 5 L12.5 10.5" stroke="#e5534b" stroke-width="1.4"/></svg>
<div class="t " style="top:110.00px;font-size:13px;line-height:13px;color:#e8e8e8;letter-spacing:-0.419px;-webkit-text-stroke:0.2px #e8e8e8;left:992.40px;">Eliminar</div>
<svg class="s" style="left:1042.55px;top:113.8px" width="8.5" height="6" viewBox="0 0 8.5 6"><path d="M1 1 L4.25 5 L7.5 1" fill="none" stroke="#e6e6e6" stroke-width="1.6" stroke-linecap="round" stroke-linejoin="round"/></svg>
<svg class="s" style="left:967px;top:131px" width="20" height="19" viewBox="0 0 20 19"><rect x="0.5" y="3.5" width="18" height="15.5" rx="1" fill="none" stroke="#cfcfcf" stroke-width="1"/><path d="M6.5 3.5 V19 M12.5 3.5 V19 M0.5 8 H18.5 M0.5 14 H18.5" stroke="#cfcfcf" stroke-width="1"/><rect x="5" y="8" width="9" height="6" fill="#2f6fc0" stroke="#5aa5f0" stroke-width="1"/><path d="M3.5 2.5 H16 M3.5 1 V4 M16 1 V4" stroke="#5aa5f0" stroke-width="1.3"/></svg>
<div class="t " style="top:134.40px;font-size:13px;line-height:13px;color:#e8e8e8;letter-spacing:-0.343px;-webkit-text-stroke:0.2px #e8e8e8;left:992.40px;">Formato</div>
<svg class="s" style="left:1044.95px;top:138.3px" width="8.5" height="6" viewBox="0 0 8.5 6"><path d="M1 1 L4.25 5 L7.5 1" fill="none" stroke="#e6e6e6" stroke-width="1.6" stroke-linecap="round" stroke-linejoin="round"/></svg>
<div class="r" style="left:1067px;top:85px;width:1px;height:69px;background:#484848;"></div>
<svg class="s" style="left:1083px;top:83px" width="17" height="18" viewBox="0 0 17 18"><path d="M15 3.5 V1.5 H1.5 L8.5 9 L1.5 16.5 H15 V14.5" fill="none" stroke="#d6d6d6" stroke-width="1.4" stroke-linejoin="miter"/></svg>
<svg class="s" style="left:1105.55px;top:89.5px" width="8.5" height="6" viewBox="0 0 8.5 6"><path d="M1 1 L4.25 5 L7.5 1" fill="none" stroke="#e6e6e6" stroke-width="1.6" stroke-linecap="round" stroke-linejoin="round"/></svg>
<svg class="s" style="left:1081px;top:108px" width="20" height="18" viewBox="0 0 20 18"><rect x="1" y="1" width="18" height="16" fill="none" stroke="#c8c8c8" stroke-width="1.2"/><path d="M1 4.5 H19" stroke="#c8c8c8" stroke-width="1"/><path d="M10 6.5 V14 M7 11 L10 14 L13 11" fill="none" stroke="#4a9be0" stroke-width="1.4"/></svg>
<svg class="s" style="left:1105.55px;top:113.5px" width="8.5" height="6" viewBox="0 0 8.5 6"><path d="M1 1 L4.25 5 L7.5 1" fill="none" stroke="#e6e6e6" stroke-width="1.6" stroke-linecap="round" stroke-linejoin="round"/></svg>
<svg class="s" style="left:1081px;top:132px" width="20" height="19" viewBox="0 0 20 19"><path d="M2 11.5 L6.5 16 Q7.5 17 8.5 16 L17.5 7 Q18.5 6 17.5 5 L13 0.5" fill="none" stroke="#b54fc9" stroke-width="0"/><path d="M1.8 11 L10.8 2 Q11.8 1 12.8 2 L17.3 6.5 Q18.3 7.5 17.3 8.5 L8.3 17.5 Q7.3 18.5 6.3 17.5 L1.8 13 Q0.8 12 1.8 11 Z" fill="none" stroke="#b54fc9" stroke-width="1.5"/><path d="M1.8 11 L5.8 7 L12.3 13.5 L8.3 17.5 Q7.3 18.5 6.3 17.5 L1.8 13 Q0.8 12 1.8 11 Z" fill="#b54fc9"/></svg>
<svg class="s" style="left:1105.55px;top:138.5px" width="8.5" height="6" viewBox="0 0 8.5 6"><path d="M1 1 L4.25 5 L7.5 1" fill="none" stroke="#e6e6e6" stroke-width="1.6" stroke-linecap="round" stroke-linejoin="round"/></svg>
<div class="t " style="top:84.46px;font-size:18px;line-height:18px;color:#4a9be0;left:1122.50px;">A</div>
<div class="t " style="top:100.69px;font-size:17.5px;line-height:17.5px;color:#d0d0d0;left:1123.00px;">Z</div>
<svg class="s" style="left:1135px;top:92px" width="21" height="20" viewBox="0 0 21 20"><path d="M1 1.5 H19.5 L12.5 9.5 V17.5 H8 V9.5 Z" fill="none" stroke="#d0d0d0" stroke-width="1.4" stroke-linejoin="round"/></svg>
<svg class="s" style="left:1161.05px;top:98.5px" width="8.5" height="6" viewBox="0 0 8.5 6"><path d="M1 1 L4.25 5 L7.5 1" fill="none" stroke="#e6e6e6" stroke-width="1.6" stroke-linecap="round" stroke-linejoin="round"/></svg>
<div class="t " style="top:123.20px;font-size:13px;line-height:13px;color:#ececec;letter-spacing:-0.456px;-webkit-text-stroke:0.2px #ececec;left:1122.70px;">Ordenar</div>
<div class="t " style="top:136.70px;font-size:13px;line-height:13px;color:#ececec;letter-spacing:0.044px;-webkit-text-stroke:0.2px #ececec;left:1124.80px;">y filtrar</div>
<svg class="s" style="left:1184px;top:84px" width="35" height="35" viewBox="0 0 35 35"><circle cx="22.5" cy="11.5" r="10.5" fill="none" stroke="#d0d0d0" stroke-width="1.5"/><path d="M15 19 L2 32.5" stroke="#d0d0d0" stroke-width="1.5"/></svg>
<svg class="s" style="left:1224.55px;top:98.5px" width="8.5" height="6" viewBox="0 0 8.5 6"><path d="M1 1 L4.25 5 L7.5 1" fill="none" stroke="#e6e6e6" stroke-width="1.6" stroke-linecap="round" stroke-linejoin="round"/></svg>
<div class="t " style="top:123.20px;font-size:13px;line-height:13px;color:#ececec;letter-spacing:-0.322px;-webkit-text-stroke:0.2px #ececec;left:1184.40px;">Buscar y</div>
<div class="t " style="top:136.70px;font-size:13px;line-height:13px;color:#ececec;letter-spacing:-0.251px;-webkit-text-stroke:0.2px #ececec;left:1177.00px;">seleccionar</div>
<div class="r" style="left:1255px;top:85px;width:1px;height:69px;background:#484848;"></div>
<svg class="s" style="left:1294px;top:84px" width="35" height="35" viewBox="0 0 35 35"><g fill="none" stroke="#c8491f" stroke-width="1.1"><rect x="1.5" y="1.5" width="31" height="31"/><rect x="4.5" y="4.5" width="10.5" height="10.5"/><rect x="19" y="4.5" width="10.5" height="10.5"/><rect x="4.5" y="19" width="10.5" height="10.5"/><rect x="19" y="19" width="10.5" height="10.5"/></g></svg>
<div class="t " style="top:123.50px;font-size:13px;line-height:13px;color:#ececec;letter-spacing:-0.336px;-webkit-text-stroke:0.2px #ececec;left:1269.00px;">Complementos</div>
<div class="r" style="left:1367px;top:85px;width:1px;height:69px;background:#484848;"></div>
<svg class="s" style="left:1381px;top:85px" width="36" height="32" viewBox="0 0 36 32"><defs><linearGradient id="cpa" x1="0" y1="0" x2="0" y2="1"><stop offset="0" stop-color="#45b4f8"/><stop offset="0.35" stop-color="#4a94d8"/><stop offset="0.65" stop-color="#86b850"/><stop offset="1" stop-color="#f4d43a"/></linearGradient><linearGradient id="cpb" x1="0" y1="0" x2="0" y2="1"><stop offset="0" stop-color="#a84ff0"/><stop offset="0.5" stop-color="#e35f9c"/><stop offset="1" stop-color="#f2b070"/></linearGradient></defs><path d="M19.5 1.5 H22.5 Q25.8 1.5 26.8 5 L28.2 9.5 H19 Z" fill="#2a4fd0"/><path d="M8.5 22.5 H15.5 L13.2 30.8 H11.8 Q9.6 30.8 9 28 Z" fill="#f0652c"/><path d="M7.2 1.5 H20.8 L14 22.8 H4 Q0.8 22.8 1.3 19.6 L4.1 4.6 Q4.8 1.5 7.2 1.5 Z" fill="url(#cpa)"/><path d="M20.4 9.2 H31.2 Q34.8 9.2 34.4 12.6 L32.3 27 Q31.6 31 27.8 31 H13.6 Z" fill="url(#cpb)"/></svg>
<svg class="s" style="left:1421.25px;top:98.5px" width="8.5" height="6" viewBox="0 0 8.5 6"><path d="M1 1 L4.25 5 L7.5 1" fill="none" stroke="#e6e6e6" stroke-width="1.6" stroke-linecap="round" stroke-linejoin="round"/></svg>
<div class="t " style="top:123.50px;font-size:13px;line-height:13px;color:#ececec;letter-spacing:-0.152px;-webkit-text-stroke:0.2px #ececec;left:1384.80px;">Copilot</div>
<div class="r" style="left:1444px;top:85px;width:1px;height:69px;background:#484848;"></div>
<div class="r" style="left:1459.3px;top:82.9px;width:35.5px;height:35.9px;background:#cd7453;box-shadow:inset 0 0 0 1px #d57b5a;"></div>
<svg class="s" style="left:1459.3px;top:82.9px" width="36" height="36" viewBox="0 0 36 36"><circle cx="18.2" cy="18.1" r="3.6" fill="#fbf7f2"/><path d="M18.20 18.10 L12.71 6.32" stroke="#fbf7f2" stroke-width="2.4" stroke-linecap="round"/><path d="M18.20 18.10 L17.60 6.62" stroke="#fbf7f2" stroke-width="1.9" stroke-linecap="round"/><path d="M18.20 18.10 L24.80 8.68" stroke="#fbf7f2" stroke-width="2.5" stroke-linecap="round"/><path d="M18.20 18.10 L29.45 15.71" stroke="#fbf7f2" stroke-width="2" stroke-linecap="round"/><path d="M18.20 18.10 L29.36 20.88" stroke="#fbf7f2" stroke-width="2.1" stroke-linecap="round"/><path d="M18.20 18.10 L25.62 25.52" stroke="#fbf7f2" stroke-width="1.9" stroke-linecap="round"/><path d="M18.20 18.10 L21.79 27.97" stroke="#fbf7f2" stroke-width="1.9" stroke-linecap="round"/><path d="M18.20 18.10 L17.15 30.05" stroke="#fbf7f2" stroke-width="2.1" stroke-linecap="round"/><path d="M18.20 18.10 L11.60 27.52" stroke="#fbf7f2" stroke-width="1.9" stroke-linecap="round"/><path d="M18.20 18.10 L8.49 23.26" stroke="#fbf7f2" stroke-width="2" stroke-linecap="round"/><path d="M18.20 18.10 L4.70 18.10" stroke="#fbf7f2" stroke-width="2" stroke-linecap="round"/><path d="M18.20 18.10 L7.60 11.48" stroke="#fbf7f2" stroke-width="2.2" stroke-linecap="round"/></svg>
<div class="t " style="top:123.50px;font-size:13px;line-height:13px;color:#ececec;letter-spacing:-0.725px;-webkit-text-stroke:0.2px #ececec;left:1462.80px;">Open</div>
<div class="t " style="top:137.20px;font-size:13px;line-height:13px;color:#ececec;letter-spacing:-0.499px;-webkit-text-stroke:0.2px #ececec;left:1458.40px;">Claude</div>
<div class="r" style="left:0px;top:157px;width:1600px;height:2px;background:#141414;"></div>
<div class="r" style="left:0px;top:159px;width:1600px;height:29px;background:#262626;"></div>
<div class="r" style="left:0.8px;top:159.4px;width:93.5px;height:27.6px;background:#1f1f1f;border:1px solid #363636;box-sizing:border-box;"></div>
<div class="t " style="top:166.57px;font-size:13.5px;line-height:13.5px;color:#ececec;letter-spacing:-0.356px;-webkit-text-stroke:0.2px #ececec;left:11.00px;">A1</div>
<svg class="s" style="left:84px;top:163px" width="10" height="21" viewBox="0 0 10 21"><path d="M0.5 6.5 L4.5 0.8 L8.5 6.5 Z" fill="#b8b8b8"/><path d="M0.5 13.8 L4.5 19.5 L8.5 13.8 Z" fill="#b8b8b8"/></svg>
<svg class="s" style="left:111px;top:168px" width="14" height="14" viewBox="0 0 14 14"><path d="M1.5 1.5 L12 12 M12 1.5 L1.5 12" stroke="#6a6a6a" stroke-width="1.8"/></svg>
<svg class="s" style="left:141px;top:168px" width="18" height="14" viewBox="0 0 18 14"><path d="M1.5 7 L6.5 12 L16.5 2" fill="none" stroke="#6a6a6a" stroke-width="1.8"/></svg>
<div class="t" style="left:167.5px;top:163px;font:italic 19px/20px 'Liberation Serif';color:#b0b0b0;letter-spacing:-0.3px">fx</div>
<svg class="s" style="left:189.55px;top:171.5px" width="8.5" height="6" viewBox="0 0 8.5 6"><path d="M1 1 L4.25 5 L7.5 1" fill="none" stroke="#e0e0e0" stroke-width="1.5" stroke-linecap="round" stroke-linejoin="round"/></svg>
<div class="r" style="left:200.8px;top:163px;width:1373px;height:21.5px;background:#353535;border-radius:4px 0 0 4px;"></div>
<div class="r" style="left:1573.8px;top:163.5px;width:25.5px;height:21px;background:#262626;border:1px solid #333;border-radius:4px;box-sizing:border-box;"></div>
<svg class="s" style="left:1582px;top:171px" width="10" height="7" viewBox="0 0 10 7"><path d="M0.5 0.5 H9 L4.75 6.8 Z" fill="#bdbdbd"/></svg>
<div class="r" style="left:0px;top:188px;width:1600px;height:3px;background:#e2e2e2;"></div>
<div class="r" style="left:0px;top:191px;width:1600px;height:23px;background:#1a1a1a;"></div>
<div class="r" style="left:0px;top:214px;width:1600px;height:732px;background:#ffffff;"></div>
<div class="r" style="left:0px;top:214px;width:24px;height:732px;background:#1a1a1a;"></div>
<div class="r" style="left:24px;top:191px;width:1px;height:755px;background:#9c9c9c;"></div>
<svg class="s" style="left:4px;top:194px" width="20" height="19" viewBox="0 0 20 19"><path d="M1.5 18 L18.5 1.5 V18 Z" fill="#4e4e4e"/></svg>
<div class="r" style="left:25.5px;top:191px;width:20px;height:23px;background:#5a5a5a;"></div>
<div class="t " style="top:197.04px;font-size:12px;line-height:12px;color:#f0f0f0;-webkit-text-stroke:0.3px #f0f0f0;left:31.50px;">A</div>
<div class="r" style="left:45px;top:191px;width:1px;height:23px;background:#3c3c3c;"></div>
<div class="t " style="top:197.04px;font-size:12px;line-height:12px;color:#f0f0f0;-webkit-text-stroke:0.3px #f0f0f0;left:158.00px;">B</div>
<div class="r" style="left:278px;top:191px;width:1px;height:23px;background:#3c3c3c;"></div>
<div class="t " style="top:197.04px;font-size:12px;line-height:12px;color:#f0f0f0;-webkit-text-stroke:0.3px #f0f0f0;left:320.83px;">C</div>
<div class="r" style="left:371px;top:191px;width:1px;height:23px;background:#3c3c3c;"></div>
<div class="t " style="top:197.04px;font-size:12px;line-height:12px;color:#f0f0f0;-webkit-text-stroke:0.3px #f0f0f0;left:414.17px;">D</div>
<div class="r" style="left:464px;top:191px;width:1px;height:23px;background:#3c3c3c;"></div>
<div class="t " style="top:197.04px;font-size:12px;line-height:12px;color:#f0f0f0;-webkit-text-stroke:0.3px #f0f0f0;left:507.83px;">E</div>
<div class="r" style="left:557px;top:191px;width:1px;height:23px;background:#3c3c3c;"></div>
<div class="t " style="top:197.04px;font-size:12px;line-height:12px;color:#f0f0f0;-webkit-text-stroke:0.3px #f0f0f0;left:601.50px;">F</div>
<div class="r" style="left:651px;top:191px;width:1px;height:23px;background:#3c3c3c;"></div>
<div class="t " style="top:197.04px;font-size:12px;line-height:12px;color:#f0f0f0;-webkit-text-stroke:0.3px #f0f0f0;left:693.83px;">G</div>
<div class="r" style="left:744px;top:191px;width:1px;height:23px;background:#3c3c3c;"></div>
<div class="t " style="top:197.04px;font-size:12px;line-height:12px;color:#f0f0f0;-webkit-text-stroke:0.3px #f0f0f0;left:787.50px;">H</div>
<div class="r" style="left:837px;top:191px;width:1px;height:23px;background:#3c3c3c;"></div>
<div class="t " style="top:197.04px;font-size:12px;line-height:12px;color:#f0f0f0;-webkit-text-stroke:0.3px #f0f0f0;left:883.50px;">I</div>
<div class="r" style="left:931px;top:191px;width:1px;height:23px;background:#3c3c3c;"></div>
<div class="t " style="top:197.04px;font-size:12px;line-height:12px;color:#f0f0f0;-webkit-text-stroke:0.3px #f0f0f0;left:975.50px;">J</div>
<div class="r" style="left:1024px;top:191px;width:1px;height:23px;background:#3c3c3c;"></div>
<div class="t " style="top:197.04px;font-size:12px;line-height:12px;color:#f0f0f0;-webkit-text-stroke:0.3px #f0f0f0;left:1067.83px;">K</div>
<div class="r" style="left:1117px;top:191px;width:1px;height:23px;background:#3c3c3c;"></div>
<div class="t " style="top:197.04px;font-size:12px;line-height:12px;color:#f0f0f0;-webkit-text-stroke:0.3px #f0f0f0;left:1161.83px;">L</div>
<div class="r" style="left:1211px;top:191px;width:1px;height:23px;background:#3c3c3c;"></div>
<div class="t " style="top:197.04px;font-size:12px;line-height:12px;color:#f0f0f0;-webkit-text-stroke:0.3px #f0f0f0;left:1253.50px;">M</div>
<div class="r" style="left:1304px;top:191px;width:1px;height:23px;background:#3c3c3c;"></div>
<div class="t " style="top:197.04px;font-size:12px;line-height:12px;color:#f0f0f0;-webkit-text-stroke:0.3px #f0f0f0;left:1347.50px;">N</div>
<div class="r" style="left:1397px;top:191px;width:1px;height:23px;background:#3c3c3c;"></div>
<div class="t " style="top:197.04px;font-size:12px;line-height:12px;color:#f0f0f0;-webkit-text-stroke:0.3px #f0f0f0;left:1440.50px;">O</div>
<div class="r" style="left:1491px;top:191px;width:1px;height:23px;background:#3c3c3c;"></div>
<div class="t " style="top:197.04px;font-size:12px;line-height:12px;color:#f0f0f0;-webkit-text-stroke:0.3px #f0f0f0;left:1534.50px;">P</div>
<div class="r" style="left:1584px;top:191px;width:1px;height:23px;background:#3c3c3c;"></div>
<div class="r" style="left:0px;top:213px;width:1600px;height:1px;background:#0e0e0e;"></div>
<div class="r" style="left:0px;top:214px;width:24px;height:23.5px;background:#5a5a5a;"></div>
<div class="t " style="top:224.04px;font-size:12px;line-height:12px;color:#f2f2f2;font-weight:bold;left:8.96px;">1</div>
<div class="r" style="left:0px;top:237px;width:24px;height:1px;background:#3a3a3a;"></div>
<div class="t " style="top:239.84px;font-size:12px;line-height:12px;color:#f2f2f2;font-weight:bold;left:8.96px;">2</div>
<div class="r" style="left:0px;top:253px;width:24px;height:1px;background:#3a3a3a;"></div>
<div class="t " style="top:256.51px;font-size:12px;line-height:12px;color:#f2f2f2;font-weight:bold;left:8.96px;">3</div>
<div class="r" style="left:0px;top:270px;width:24px;height:1px;background:#3a3a3a;"></div>
<div class="t " style="top:273.18px;font-size:12px;line-height:12px;color:#f2f2f2;font-weight:bold;left:8.96px;">4</div>
<div class="r" style="left:0px;top:287px;width:24px;height:1px;background:#3a3a3a;"></div>
<div class="t " style="top:289.84px;font-size:12px;line-height:12px;color:#f2f2f2;font-weight:bold;left:8.96px;">5</div>
<div class="r" style="left:0px;top:303px;width:24px;height:1px;background:#3a3a3a;"></div>
<div class="t " style="top:306.51px;font-size:12px;line-height:12px;color:#f2f2f2;font-weight:bold;left:8.96px;">6</div>
<div class="r" style="left:0px;top:320px;width:24px;height:1px;background:#3a3a3a;"></div>
<div class="t " style="top:323.18px;font-size:12px;line-height:12px;color:#f2f2f2;font-weight:bold;left:8.96px;">7</div>
<div class="r" style="left:0px;top:337px;width:24px;height:1px;background:#3a3a3a;"></div>
<div class="t " style="top:339.84px;font-size:12px;line-height:12px;color:#f2f2f2;font-weight:bold;left:8.96px;">8</div>
<div class="r" style="left:0px;top:353px;width:24px;height:1px;background:#3a3a3a;"></div>
<div class="t " style="top:356.51px;font-size:12px;line-height:12px;color:#f2f2f2;font-weight:bold;left:8.96px;">9</div>
<div class="r" style="left:0px;top:370px;width:24px;height:1px;background:#3a3a3a;"></div>
<div class="t " style="top:373.18px;font-size:12px;line-height:12px;color:#f2f2f2;font-weight:bold;letter-spacing:-0.300px;left:5.93px;">10</div>
<div class="r" style="left:0px;top:387px;width:24px;height:1px;background:#3a3a3a;"></div>
<div class="t " style="top:389.84px;font-size:12px;line-height:12px;color:#f2f2f2;font-weight:bold;letter-spacing:-0.300px;left:6.26px;">11</div>
<div class="r" style="left:0px;top:403px;width:24px;height:1px;background:#3a3a3a;"></div>
<div class="t " style="top:406.51px;font-size:12px;line-height:12px;color:#f2f2f2;font-weight:bold;letter-spacing:-0.300px;left:5.93px;">12</div>
<div class="r" style="left:0px;top:420px;width:24px;height:1px;background:#3a3a3a;"></div>
<div class="t " style="top:423.18px;font-size:12px;line-height:12px;color:#f2f2f2;font-weight:bold;letter-spacing:-0.300px;left:5.93px;">13</div>
<div class="r" style="left:0px;top:437px;width:24px;height:1px;background:#3a3a3a;"></div>
<div class="t " style="top:439.84px;font-size:12px;line-height:12px;color:#f2f2f2;font-weight:bold;letter-spacing:-0.300px;left:5.93px;">14</div>
<div class="r" style="left:0px;top:453px;width:24px;height:1px;background:#3a3a3a;"></div>
<div class="t " style="top:456.51px;font-size:12px;line-height:12px;color:#f2f2f2;font-weight:bold;letter-spacing:-0.300px;left:5.93px;">15</div>
<div class="r" style="left:0px;top:470px;width:24px;height:1px;background:#3a3a3a;"></div>
<div class="t " style="top:473.18px;font-size:12px;line-height:12px;color:#f2f2f2;font-weight:bold;letter-spacing:-0.300px;left:5.93px;">16</div>
<div class="r" style="left:0px;top:487px;width:24px;height:1px;background:#3a3a3a;"></div>
<div class="t " style="top:489.84px;font-size:12px;line-height:12px;color:#f2f2f2;font-weight:bold;letter-spacing:-0.300px;left:5.93px;">17</div>
<div class="r" style="left:0px;top:503px;width:24px;height:1px;background:#3a3a3a;"></div>
<div class="t " style="top:506.51px;font-size:12px;line-height:12px;color:#f2f2f2;font-weight:bold;letter-spacing:-0.300px;left:5.93px;">18</div>
<div class="r" style="left:0px;top:520px;width:24px;height:1px;background:#3a3a3a;"></div>
<div class="t " style="top:523.18px;font-size:12px;line-height:12px;color:#f2f2f2;font-weight:bold;letter-spacing:-0.300px;left:5.93px;">19</div>
<div class="r" style="left:0px;top:537px;width:24px;height:1px;background:#3a3a3a;"></div>
<div class="t " style="top:539.84px;font-size:12px;line-height:12px;color:#f2f2f2;font-weight:bold;letter-spacing:-0.300px;left:5.93px;">20</div>
<div class="r" style="left:0px;top:553px;width:24px;height:1px;background:#3a3a3a;"></div>
<div class="t " style="top:556.51px;font-size:12px;line-height:12px;color:#f2f2f2;font-weight:bold;letter-spacing:-0.300px;left:5.93px;">21</div>
<div class="r" style="left:0px;top:570px;width:24px;height:1px;background:#3a3a3a;"></div>
<div class="t " style="top:573.18px;font-size:12px;line-height:12px;color:#f2f2f2;font-weight:bold;letter-spacing:-0.300px;left:5.93px;">22</div>
<div class="r" style="left:0px;top:587px;width:24px;height:1px;background:#3a3a3a;"></div>
<div class="t " style="top:589.84px;font-size:12px;line-height:12px;color:#f2f2f2;font-weight:bold;letter-spacing:-0.300px;left:5.93px;">23</div>
<div class="r" style="left:0px;top:603px;width:24px;height:1px;background:#3a3a3a;"></div>
<div class="t " style="top:606.51px;font-size:12px;line-height:12px;color:#f2f2f2;font-weight:bold;letter-spacing:-0.300px;left:5.93px;">24</div>
<div class="r" style="left:0px;top:620px;width:24px;height:1px;background:#3a3a3a;"></div>
<div class="t " style="top:623.18px;font-size:12px;line-height:12px;color:#f2f2f2;font-weight:bold;letter-spacing:-0.300px;left:5.93px;">25</div>
<div class="r" style="left:0px;top:637px;width:24px;height:1px;background:#3a3a3a;"></div>
<div class="t " style="top:639.84px;font-size:12px;line-height:12px;color:#f2f2f2;font-weight:bold;letter-spacing:-0.300px;left:5.93px;">26</div>
<div class="r" style="left:0px;top:653px;width:24px;height:1px;background:#3a3a3a;"></div>
<div class="t " style="top:656.51px;font-size:12px;line-height:12px;color:#f2f2f2;font-weight:bold;letter-spacing:-0.300px;left:5.93px;">27</div>
<div class="r" style="left:0px;top:670px;width:24px;height:1px;background:#3a3a3a;"></div>
<div class="t " style="top:673.18px;font-size:12px;line-height:12px;color:#f2f2f2;font-weight:bold;letter-spacing:-0.300px;left:5.93px;">28</div>
<div class="r" style="left:0px;top:687px;width:24px;height:1px;background:#3a3a3a;"></div>
<div class="t " style="top:689.84px;font-size:12px;line-height:12px;color:#f2f2f2;font-weight:bold;letter-spacing:-0.300px;left:5.93px;">29</div>
<div class="r" style="left:0px;top:703px;width:24px;height:1px;background:#3a3a3a;"></div>
<div class="t " style="top:706.51px;font-size:12px;line-height:12px;color:#f2f2f2;font-weight:bold;letter-spacing:-0.300px;left:5.93px;">30</div>
<div class="r" style="left:0px;top:720px;width:24px;height:1px;background:#3a3a3a;"></div>
<div class="t " style="top:723.18px;font-size:12px;line-height:12px;color:#f2f2f2;font-weight:bold;letter-spacing:-0.300px;left:5.93px;">31</div>
<div class="r" style="left:0px;top:737px;width:24px;height:1px;background:#3a3a3a;"></div>
<div class="t " style="top:739.84px;font-size:12px;line-height:12px;color:#f2f2f2;font-weight:bold;letter-spacing:-0.300px;left:5.93px;">32</div>
<div class="r" style="left:0px;top:753px;width:24px;height:1px;background:#3a3a3a;"></div>
<div class="t " style="top:756.51px;font-size:12px;line-height:12px;color:#f2f2f2;font-weight:bold;letter-spacing:-0.300px;left:5.93px;">33</div>
<div class="r" style="left:0px;top:770px;width:24px;height:1px;background:#3a3a3a;"></div>
<div class="t " style="top:773.18px;font-size:12px;line-height:12px;color:#f2f2f2;font-weight:bold;letter-spacing:-0.300px;left:5.93px;">34</div>
<div class="r" style="left:0px;top:787px;width:24px;height:1px;background:#3a3a3a;"></div>
<div class="t " style="top:789.84px;font-size:12px;line-height:12px;color:#f2f2f2;font-weight:bold;letter-spacing:-0.300px;left:5.93px;">35</div>
<div class="r" style="left:0px;top:803px;width:24px;height:1px;background:#3a3a3a;"></div>
<div class="t " style="top:806.51px;font-size:12px;line-height:12px;color:#f2f2f2;font-weight:bold;letter-spacing:-0.300px;left:5.93px;">36</div>
<div class="r" style="left:0px;top:820px;width:24px;height:1px;background:#3a3a3a;"></div>
<div class="t " style="top:823.18px;font-size:12px;line-height:12px;color:#f2f2f2;font-weight:bold;letter-spacing:-0.300px;left:5.93px;">37</div>
<div class="r" style="left:0px;top:837px;width:24px;height:1px;background:#3a3a3a;"></div>
<div class="t " style="top:839.84px;font-size:12px;line-height:12px;color:#f2f2f2;font-weight:bold;letter-spacing:-0.300px;left:5.93px;">38</div>
<div class="r" style="left:0px;top:853px;width:24px;height:1px;background:#3a3a3a;"></div>
<div class="t " style="top:856.51px;font-size:12px;line-height:12px;color:#f2f2f2;font-weight:bold;letter-spacing:-0.300px;left:5.93px;">39</div>
<div class="r" style="left:0px;top:870px;width:24px;height:1px;background:#3a3a3a;"></div>
<div class="t " style="top:873.18px;font-size:12px;line-height:12px;color:#f2f2f2;font-weight:bold;letter-spacing:-0.300px;left:5.93px;">40</div>
<div class="r" style="left:0px;top:887px;width:24px;height:1px;background:#3a3a3a;"></div>
<div class="t " style="top:889.84px;font-size:12px;line-height:12px;color:#f2f2f2;font-weight:bold;letter-spacing:-0.300px;left:5.93px;">41</div>
<div class="r" style="left:0px;top:903px;width:24px;height:1px;background:#3a3a3a;"></div>
<div class="t " style="top:906.51px;font-size:12px;line-height:12px;color:#f2f2f2;font-weight:bold;letter-spacing:-0.300px;left:5.93px;">42</div>
<div class="r" style="left:0px;top:920px;width:24px;height:1px;background:#3a3a3a;"></div>
<div class="t " style="top:923.18px;font-size:12px;line-height:12px;color:#f2f2f2;font-weight:bold;letter-spacing:-0.300px;left:5.93px;">43</div>
<div class="r" style="left:0px;top:937px;width:24px;height:1px;background:#3a3a3a;"></div>
<div class="t " style="top:939.84px;font-size:12px;line-height:12px;color:#f2f2f2;font-weight:bold;letter-spacing:-0.300px;left:5.93px;">44</div>
<div class="r" style="left:0px;top:214px;width:25px;height:1px;background:#8c8c8c;"></div>
<div class="r" style="left:25.5px;top:286.5px;width:20px;height:1px;background:#a8a8a8;"></div>
<div class="r" style="left:45.5px;top:287.50001px;width:1554.5px;height:16.66667000000001px;background:#f0f4f9;"></div>
<div class="r" style="left:45.5px;top:370.83335999999997px;width:1554.5px;height:16.666670000000067px;background:#f0f4f9;"></div>
<div class="r" style="left:45.5px;top:487.50005px;width:1554.5px;height:16.66667000000001px;background:#f0f4f9;"></div>
<div class="r" style="left:45.5px;top:605.66674px;width:1554.5px;height:12px;background:#f0f4f9;"></div>
<div class="r" style="left:45.5px;top:271px;width:1554.5px;height:15.5px;background:#15223f;"></div>
<div class="r" style="left:45.5px;top:286.5px;width:1554.5px;height:1px;background:#c9ccd2;"></div>
<div class="t " style="top:273.24px;font-size:12px;line-height:12px;color:#ffffff;font-weight:bold;left:306.17px;">Apr-26</div>
<div class="r" style="left:370.2333px;top:271px;width:1.3px;height:15.5px;background:#9aa0ab;"></div>
<div class="t " style="top:273.24px;font-size:12px;line-height:12px;color:#ffffff;font-weight:bold;left:398.16px;">May-26</div>
<div class="r" style="left:463.5666px;top:271px;width:1.3px;height:15.5px;background:#9aa0ab;"></div>
<div class="t " style="top:273.24px;font-size:12px;line-height:12px;color:#ffffff;font-weight:bold;left:492.50px;">Jun-26</div>
<div class="r" style="left:556.8999px;top:271px;width:1.3px;height:15.5px;background:#9aa0ab;"></div>
<div class="t " style="top:273.24px;font-size:12px;line-height:12px;color:#ffffff;font-weight:bold;left:587.83px;">Jul-26</div>
<div class="r" style="left:650.2332px;top:271px;width:1.3px;height:15.5px;background:#9aa0ab;"></div>
<div class="t " style="top:273.24px;font-size:12px;line-height:12px;color:#ffffff;font-weight:bold;left:678.17px;">Aug-26</div>
<div class="r" style="left:743.5665px;top:271px;width:1.3px;height:15.5px;background:#9aa0ab;"></div>
<div class="t " style="top:273.24px;font-size:12px;line-height:12px;color:#ffffff;font-weight:bold;left:772.16px;">Sep-26</div>
<div class="r" style="left:836.8997999999999px;top:271px;width:1.3px;height:15.5px;background:#9aa0ab;"></div>
<div class="t " style="top:273.24px;font-size:12px;line-height:12px;color:#ffffff;font-weight:bold;left:866.50px;">Oct-26</div>
<div class="r" style="left:930.2330999999999px;top:271px;width:1.3px;height:15.5px;background:#9aa0ab;"></div>
<div class="t " style="top:273.24px;font-size:12px;line-height:12px;color:#ffffff;font-weight:bold;left:958.50px;">Nov-26</div>
<div class="r" style="left:1023.5664px;top:271px;width:1.3px;height:15.5px;background:#9aa0ab;"></div>
<div class="t " style="top:273.24px;font-size:12px;line-height:12px;color:#ffffff;font-weight:bold;left:1052.16px;">Dec-26</div>
<div class="r" style="left:1116.8997px;top:271px;width:1.3px;height:15.5px;background:#9aa0ab;"></div>
<div class="t " style="top:273.24px;font-size:12px;line-height:12px;color:#ffffff;font-weight:bold;left:1146.16px;">Jan-27</div>
<div class="r" style="left:1210.2330000000002px;top:271px;width:1.3px;height:15.5px;background:#9aa0ab;"></div>
<div class="t " style="top:273.24px;font-size:12px;line-height:12px;color:#ffffff;font-weight:bold;left:1239.16px;">Feb-27</div>
<div class="r" style="left:1303.5663px;top:271px;width:1.3px;height:15.5px;background:#9aa0ab;"></div>
<div class="t " style="top:273.24px;font-size:12px;line-height:12px;color:#ffffff;font-weight:bold;left:1332.49px;">Mar-27</div>
<div class="r" style="left:1396.8996px;top:271px;width:1.3px;height:15.5px;background:#9aa0ab;"></div>
<div class="t " style="top:273.24px;font-size:12px;line-height:12px;color:#ffffff;font-weight:bold;left:1426.16px;">Apr-27</div>
<div class="r" style="left:1490.2329px;top:271px;width:1.3px;height:15.5px;background:#9aa0ab;"></div>
<div class="t " style="top:273.24px;font-size:12px;line-height:12px;color:#ffffff;font-weight:bold;left:1518.16px;">May-27</div>
<div class="r" style="left:1583.5662px;top:271px;width:1.3px;height:15.5px;background:#9aa0ab;"></div>
<div class="r" style="left:45.5px;top:303px;width:1554.5px;height:1px;background:#d6d6d6;"></div>
<div class="r" style="left:45.5px;top:320px;width:1554.5px;height:1px;background:#d6d6d6;"></div>
<div class="r" style="left:45.5px;top:370px;width:1554.5px;height:1px;background:#d6d6d6;"></div>
<div class="r" style="left:45.5px;top:387px;width:1554.5px;height:1px;background:#d6d6d6;"></div>
<div class="r" style="left:45.5px;top:403px;width:1554.5px;height:1px;background:#d6d6d6;"></div>
<div class="r" style="left:45.5px;top:420px;width:1554.5px;height:1px;background:#d6d6d6;"></div>
<div class="r" style="left:45.5px;top:437px;width:1554.5px;height:1px;background:#d6d6d6;"></div>
<div class="r" style="left:45.5px;top:487px;width:1554.5px;height:1px;background:#d6d6d6;"></div>
<div class="r" style="left:45.5px;top:520px;width:1554.5px;height:1px;background:#d6d6d6;"></div>
<div class="r" style="left:45.5px;top:537px;width:1554.5px;height:1px;background:#d6d6d6;"></div>
<div class="r" style="left:45.5px;top:553px;width:1554.5px;height:1px;background:#d6d6d6;"></div>
<div class="r" style="left:45.5px;top:570px;width:1554.5px;height:1px;background:#d6d6d6;"></div>
<div class="r" style="left:45.5px;top:587px;width:1554.5px;height:1px;background:#d6d6d6;"></div>
<div class="r" style="left:45.5px;top:637px;width:1554.5px;height:1px;background:#d6d6d6;"></div>
<div class="r" style="left:45.5px;top:653px;width:1554.5px;height:1px;background:#d6d6d6;"></div>
<div class="r" style="left:45.5px;top:670px;width:1554.5px;height:1px;background:#d6d6d6;"></div>
<div class="r" style="left:45px;top:303px;width:1px;height:18px;background:#d6d6d6;"></div>
<div class="r" style="left:371px;top:303px;width:1px;height:18px;background:#d6d6d6;"></div>
<div class="r" style="left:464px;top:303px;width:1px;height:18px;background:#d6d6d6;"></div>
<div class="r" style="left:557px;top:303px;width:1px;height:18px;background:#d6d6d6;"></div>
<div class="r" style="left:651px;top:303px;width:1px;height:18px;background:#d6d6d6;"></div>
<div class="r" style="left:744px;top:303px;width:1px;height:18px;background:#d6d6d6;"></div>
<div class="r" style="left:837px;top:303px;width:1px;height:18px;background:#d6d6d6;"></div>
<div class="r" style="left:931px;top:303px;width:1px;height:18px;background:#d6d6d6;"></div>
<div class="r" style="left:1024px;top:303px;width:1px;height:18px;background:#d6d6d6;"></div>
<div class="r" style="left:1117px;top:303px;width:1px;height:18px;background:#d6d6d6;"></div>
<div class="r" style="left:1211px;top:303px;width:1px;height:18px;background:#d6d6d6;"></div>
<div class="r" style="left:1304px;top:303px;width:1px;height:18px;background:#d6d6d6;"></div>
<div class="r" style="left:1397px;top:303px;width:1px;height:18px;background:#d6d6d6;"></div>
<div class="r" style="left:1491px;top:303px;width:1px;height:18px;background:#d6d6d6;"></div>
<div class="r" style="left:1584px;top:303px;width:1px;height:18px;background:#d6d6d6;"></div>
<div class="r" style="left:45px;top:320px;width:1px;height:18px;background:#d6d6d6;"></div>
<div class="r" style="left:371px;top:320px;width:1px;height:18px;background:#d6d6d6;"></div>
<div class="r" style="left:464px;top:320px;width:1px;height:18px;background:#d6d6d6;"></div>
<div class="r" style="left:557px;top:320px;width:1px;height:18px;background:#d6d6d6;"></div>
<div class="r" style="left:651px;top:320px;width:1px;height:18px;background:#d6d6d6;"></div>
<div class="r" style="left:744px;top:320px;width:1px;height:18px;background:#d6d6d6;"></div>
<div class="r" style="left:837px;top:320px;width:1px;height:18px;background:#d6d6d6;"></div>
<div class="r" style="left:931px;top:320px;width:1px;height:18px;background:#d6d6d6;"></div>
<div class="r" style="left:1024px;top:320px;width:1px;height:18px;background:#d6d6d6;"></div>
<div class="r" style="left:1117px;top:320px;width:1px;height:18px;background:#d6d6d6;"></div>
<div class="r" style="left:1211px;top:320px;width:1px;height:18px;background:#d6d6d6;"></div>
<div class="r" style="left:1304px;top:320px;width:1px;height:18px;background:#d6d6d6;"></div>
<div class="r" style="left:1397px;top:320px;width:1px;height:18px;background:#d6d6d6;"></div>
<div class="r" style="left:1491px;top:320px;width:1px;height:18px;background:#d6d6d6;"></div>
<div class="r" style="left:1584px;top:320px;width:1px;height:18px;background:#d6d6d6;"></div>
<div class="r" style="left:45px;top:387px;width:1px;height:17px;background:#d6d6d6;"></div>
<div class="r" style="left:371px;top:387px;width:1px;height:17px;background:#d6d6d6;"></div>
<div class="r" style="left:464px;top:387px;width:1px;height:17px;background:#d6d6d6;"></div>
<div class="r" style="left:557px;top:387px;width:1px;height:17px;background:#d6d6d6;"></div>
<div class="r" style="left:651px;top:387px;width:1px;height:17px;background:#d6d6d6;"></div>
<div class="r" style="left:744px;top:387px;width:1px;height:17px;background:#d6d6d6;"></div>
<div class="r" style="left:837px;top:387px;width:1px;height:17px;background:#d6d6d6;"></div>
<div class="r" style="left:931px;top:387px;width:1px;height:17px;background:#d6d6d6;"></div>
<div class="r" style="left:1024px;top:387px;width:1px;height:17px;background:#d6d6d6;"></div>
<div class="r" style="left:1117px;top:387px;width:1px;height:17px;background:#d6d6d6;"></div>
<div class="r" style="left:1211px;top:387px;width:1px;height:17px;background:#d6d6d6;"></div>
<div class="r" style="left:1304px;top:387px;width:1px;height:17px;background:#d6d6d6;"></div>
<div class="r" style="left:1397px;top:387px;width:1px;height:17px;background:#d6d6d6;"></div>
<div class="r" style="left:1491px;top:387px;width:1px;height:17px;background:#d6d6d6;"></div>
<div class="r" style="left:1584px;top:387px;width:1px;height:17px;background:#d6d6d6;"></div>
<div class="r" style="left:45px;top:403px;width:1px;height:18px;background:#d6d6d6;"></div>
<div class="r" style="left:371px;top:403px;width:1px;height:18px;background:#d6d6d6;"></div>
<div class="r" style="left:464px;top:403px;width:1px;height:18px;background:#d6d6d6;"></div>
<div class="r" style="left:557px;top:403px;width:1px;height:18px;background:#d6d6d6;"></div>
<div class="r" style="left:651px;top:403px;width:1px;height:18px;background:#d6d6d6;"></div>
<div class="r" style="left:744px;top:403px;width:1px;height:18px;background:#d6d6d6;"></div>
<div class="r" style="left:837px;top:403px;width:1px;height:18px;background:#d6d6d6;"></div>
<div class="r" style="left:931px;top:403px;width:1px;height:18px;background:#d6d6d6;"></div>
<div class="r" style="left:1024px;top:403px;width:1px;height:18px;background:#d6d6d6;"></div>
<div class="r" style="left:1117px;top:403px;width:1px;height:18px;background:#d6d6d6;"></div>
<div class="r" style="left:1211px;top:403px;width:1px;height:18px;background:#d6d6d6;"></div>
<div class="r" style="left:1304px;top:403px;width:1px;height:18px;background:#d6d6d6;"></div>
<div class="r" style="left:1397px;top:403px;width:1px;height:18px;background:#d6d6d6;"></div>
<div class="r" style="left:1491px;top:403px;width:1px;height:18px;background:#d6d6d6;"></div>
<div class="r" style="left:1584px;top:403px;width:1px;height:18px;background:#d6d6d6;"></div>
<div class="r" style="left:45px;top:420px;width:1px;height:18px;background:#d6d6d6;"></div>
<div class="r" style="left:371px;top:420px;width:1px;height:18px;background:#d6d6d6;"></div>
<div class="r" style="left:464px;top:420px;width:1px;height:18px;background:#d6d6d6;"></div>
<div class="r" style="left:557px;top:420px;width:1px;height:18px;background:#d6d6d6;"></div>
<div class="r" style="left:651px;top:420px;width:1px;height:18px;background:#d6d6d6;"></div>
<div class="r" style="left:744px;top:420px;width:1px;height:18px;background:#d6d6d6;"></div>
<div class="r" style="left:837px;top:420px;width:1px;height:18px;background:#d6d6d6;"></div>
<div class="r" style="left:931px;top:420px;width:1px;height:18px;background:#d6d6d6;"></div>
<div class="r" style="left:1024px;top:420px;width:1px;height:18px;background:#d6d6d6;"></div>
<div class="r" style="left:1117px;top:420px;width:1px;height:18px;background:#d6d6d6;"></div>
<div class="r" style="left:1211px;top:420px;width:1px;height:18px;background:#d6d6d6;"></div>
<div class="r" style="left:1304px;top:420px;width:1px;height:18px;background:#d6d6d6;"></div>
<div class="r" style="left:1397px;top:420px;width:1px;height:18px;background:#d6d6d6;"></div>
<div class="r" style="left:1491px;top:420px;width:1px;height:18px;background:#d6d6d6;"></div>
<div class="r" style="left:1584px;top:420px;width:1px;height:18px;background:#d6d6d6;"></div>
<div class="r" style="left:45px;top:437px;width:1px;height:17px;background:#d6d6d6;"></div>
<div class="r" style="left:371px;top:437px;width:1px;height:17px;background:#d6d6d6;"></div>
<div class="r" style="left:464px;top:437px;width:1px;height:17px;background:#d6d6d6;"></div>
<div class="r" style="left:557px;top:437px;width:1px;height:17px;background:#d6d6d6;"></div>
<div class="r" style="left:651px;top:437px;width:1px;height:17px;background:#d6d6d6;"></div>
<div class="r" style="left:744px;top:437px;width:1px;height:17px;background:#d6d6d6;"></div>
<div class="r" style="left:837px;top:437px;width:1px;height:17px;background:#d6d6d6;"></div>
<div class="r" style="left:931px;top:437px;width:1px;height:17px;background:#d6d6d6;"></div>
<div class="r" style="left:1024px;top:437px;width:1px;height:17px;background:#d6d6d6;"></div>
<div class="r" style="left:1117px;top:437px;width:1px;height:17px;background:#d6d6d6;"></div>
<div class="r" style="left:1211px;top:437px;width:1px;height:17px;background:#d6d6d6;"></div>
<div class="r" style="left:1304px;top:437px;width:1px;height:17px;background:#d6d6d6;"></div>
<div class="r" style="left:1397px;top:437px;width:1px;height:17px;background:#d6d6d6;"></div>
<div class="r" style="left:1491px;top:437px;width:1px;height:17px;background:#d6d6d6;"></div>
<div class="r" style="left:1584px;top:437px;width:1px;height:17px;background:#d6d6d6;"></div>
<div class="r" style="left:45px;top:503px;width:1px;height:18px;background:#d6d6d6;"></div>
<div class="r" style="left:371px;top:503px;width:1px;height:18px;background:#d6d6d6;"></div>
<div class="r" style="left:464px;top:503px;width:1px;height:18px;background:#d6d6d6;"></div>
<div class="r" style="left:557px;top:503px;width:1px;height:18px;background:#d6d6d6;"></div>
<div class="r" style="left:651px;top:503px;width:1px;height:18px;background:#d6d6d6;"></div>
<div class="r" style="left:744px;top:503px;width:1px;height:18px;background:#d6d6d6;"></div>
<div class="r" style="left:837px;top:503px;width:1px;height:18px;background:#d6d6d6;"></div>
<div class="r" style="left:931px;top:503px;width:1px;height:18px;background:#d6d6d6;"></div>
<div class="r" style="left:1024px;top:503px;width:1px;height:18px;background:#d6d6d6;"></div>
<div class="r" style="left:1117px;top:503px;width:1px;height:18px;background:#d6d6d6;"></div>
<div class="r" style="left:1211px;top:503px;width:1px;height:18px;background:#d6d6d6;"></div>
<div class="r" style="left:1304px;top:503px;width:1px;height:18px;background:#d6d6d6;"></div>
<div class="r" style="left:1397px;top:503px;width:1px;height:18px;background:#d6d6d6;"></div>
<div class="r" style="left:1491px;top:503px;width:1px;height:18px;background:#d6d6d6;"></div>
<div class="r" style="left:1584px;top:503px;width:1px;height:18px;background:#d6d6d6;"></div>
<div class="r" style="left:45px;top:520px;width:1px;height:18px;background:#d6d6d6;"></div>
<div class="r" style="left:371px;top:520px;width:1px;height:18px;background:#d6d6d6;"></div>
<div class="r" style="left:464px;top:520px;width:1px;height:18px;background:#d6d6d6;"></div>
<div class="r" style="left:557px;top:520px;width:1px;height:18px;background:#d6d6d6;"></div>
<div class="r" style="left:651px;top:520px;width:1px;height:18px;background:#d6d6d6;"></div>
<div class="r" style="left:744px;top:520px;width:1px;height:18px;background:#d6d6d6;"></div>
<div class="r" style="left:837px;top:520px;width:1px;height:18px;background:#d6d6d6;"></div>
<div class="r" style="left:931px;top:520px;width:1px;height:18px;background:#d6d6d6;"></div>
<div class="r" style="left:1024px;top:520px;width:1px;height:18px;background:#d6d6d6;"></div>
<div class="r" style="left:1117px;top:520px;width:1px;height:18px;background:#d6d6d6;"></div>
<div class="r" style="left:1211px;top:520px;width:1px;height:18px;background:#d6d6d6;"></div>
<div class="r" style="left:1304px;top:520px;width:1px;height:18px;background:#d6d6d6;"></div>
<div class="r" style="left:1397px;top:520px;width:1px;height:18px;background:#d6d6d6;"></div>
<div class="r" style="left:1491px;top:520px;width:1px;height:18px;background:#d6d6d6;"></div>
<div class="r" style="left:1584px;top:520px;width:1px;height:18px;background:#d6d6d6;"></div>
<div class="r" style="left:45px;top:537px;width:1px;height:17px;background:#d6d6d6;"></div>
<div class="r" style="left:371px;top:537px;width:1px;height:17px;background:#d6d6d6;"></div>
<div class="r" style="left:464px;top:537px;width:1px;height:17px;background:#d6d6d6;"></div>
<div class="r" style="left:557px;top:537px;width:1px;height:17px;background:#d6d6d6;"></div>
<div class="r" style="left:651px;top:537px;width:1px;height:17px;background:#d6d6d6;"></div>
<div class="r" style="left:744px;top:537px;width:1px;height:17px;background:#d6d6d6;"></div>
<div class="r" style="left:837px;top:537px;width:1px;height:17px;background:#d6d6d6;"></div>
<div class="r" style="left:931px;top:537px;width:1px;height:17px;background:#d6d6d6;"></div>
<div class="r" style="left:1024px;top:537px;width:1px;height:17px;background:#d6d6d6;"></div>
<div class="r" style="left:1117px;top:537px;width:1px;height:17px;background:#d6d6d6;"></div>
<div class="r" style="left:1211px;top:537px;width:1px;height:17px;background:#d6d6d6;"></div>
<div class="r" style="left:1304px;top:537px;width:1px;height:17px;background:#d6d6d6;"></div>
<div class="r" style="left:1397px;top:537px;width:1px;height:17px;background:#d6d6d6;"></div>
<div class="r" style="left:1491px;top:537px;width:1px;height:17px;background:#d6d6d6;"></div>
<div class="r" style="left:1584px;top:537px;width:1px;height:17px;background:#d6d6d6;"></div>
<div class="r" style="left:45px;top:570px;width:1px;height:18px;background:#d6d6d6;"></div>
<div class="r" style="left:371px;top:570px;width:1px;height:18px;background:#d6d6d6;"></div>
<div class="r" style="left:464px;top:570px;width:1px;height:18px;background:#d6d6d6;"></div>
<div class="r" style="left:557px;top:570px;width:1px;height:18px;background:#d6d6d6;"></div>
<div class="r" style="left:651px;top:570px;width:1px;height:18px;background:#d6d6d6;"></div>
<div class="r" style="left:744px;top:570px;width:1px;height:18px;background:#d6d6d6;"></div>
<div class="r" style="left:837px;top:570px;width:1px;height:18px;background:#d6d6d6;"></div>
<div class="r" style="left:931px;top:570px;width:1px;height:18px;background:#d6d6d6;"></div>
<div class="r" style="left:1024px;top:570px;width:1px;height:18px;background:#d6d6d6;"></div>
<div class="r" style="left:1117px;top:570px;width:1px;height:18px;background:#d6d6d6;"></div>
<div class="r" style="left:1211px;top:570px;width:1px;height:18px;background:#d6d6d6;"></div>
<div class="r" style="left:1304px;top:570px;width:1px;height:18px;background:#d6d6d6;"></div>
<div class="r" style="left:1397px;top:570px;width:1px;height:18px;background:#d6d6d6;"></div>
<div class="r" style="left:1491px;top:570px;width:1px;height:18px;background:#d6d6d6;"></div>
<div class="r" style="left:1584px;top:570px;width:1px;height:18px;background:#d6d6d6;"></div>
<div class="r" style="left:45px;top:587px;width:1px;height:17px;background:#d6d6d6;"></div>
<div class="r" style="left:371px;top:587px;width:1px;height:17px;background:#d6d6d6;"></div>
<div class="r" style="left:464px;top:587px;width:1px;height:17px;background:#d6d6d6;"></div>
<div class="r" style="left:557px;top:587px;width:1px;height:17px;background:#d6d6d6;"></div>
<div class="r" style="left:651px;top:587px;width:1px;height:17px;background:#d6d6d6;"></div>
<div class="r" style="left:744px;top:587px;width:1px;height:17px;background:#d6d6d6;"></div>
<div class="r" style="left:837px;top:587px;width:1px;height:17px;background:#d6d6d6;"></div>
<div class="r" style="left:931px;top:587px;width:1px;height:17px;background:#d6d6d6;"></div>
<div class="r" style="left:1024px;top:587px;width:1px;height:17px;background:#d6d6d6;"></div>
<div class="r" style="left:1117px;top:587px;width:1px;height:17px;background:#d6d6d6;"></div>
<div class="r" style="left:1211px;top:587px;width:1px;height:17px;background:#d6d6d6;"></div>
<div class="r" style="left:1304px;top:587px;width:1px;height:17px;background:#d6d6d6;"></div>
<div class="r" style="left:1397px;top:587px;width:1px;height:17px;background:#d6d6d6;"></div>
<div class="r" style="left:1491px;top:587px;width:1px;height:17px;background:#d6d6d6;"></div>
<div class="r" style="left:1584px;top:587px;width:1px;height:17px;background:#d6d6d6;"></div>
<div class="r" style="left:45px;top:637px;width:1px;height:17px;background:#d6d6d6;"></div>
<div class="r" style="left:371px;top:637px;width:1px;height:17px;background:#d6d6d6;"></div>
<div class="r" style="left:464px;top:637px;width:1px;height:17px;background:#d6d6d6;"></div>
<div class="r" style="left:557px;top:637px;width:1px;height:17px;background:#d6d6d6;"></div>
<div class="r" style="left:651px;top:637px;width:1px;height:17px;background:#d6d6d6;"></div>
<div class="r" style="left:744px;top:637px;width:1px;height:17px;background:#d6d6d6;"></div>
<div class="r" style="left:837px;top:637px;width:1px;height:17px;background:#d6d6d6;"></div>
<div class="r" style="left:931px;top:637px;width:1px;height:17px;background:#d6d6d6;"></div>
<div class="r" style="left:1024px;top:637px;width:1px;height:17px;background:#d6d6d6;"></div>
<div class="r" style="left:1117px;top:637px;width:1px;height:17px;background:#d6d6d6;"></div>
<div class="r" style="left:1211px;top:637px;width:1px;height:17px;background:#d6d6d6;"></div>
<div class="r" style="left:1304px;top:637px;width:1px;height:17px;background:#d6d6d6;"></div>
<div class="r" style="left:1397px;top:637px;width:1px;height:17px;background:#d6d6d6;"></div>
<div class="r" style="left:1491px;top:637px;width:1px;height:17px;background:#d6d6d6;"></div>
<div class="r" style="left:1584px;top:637px;width:1px;height:17px;background:#d6d6d6;"></div>
<div class="r" style="left:45px;top:653px;width:1px;height:18px;background:#d6d6d6;"></div>
<div class="r" style="left:371px;top:653px;width:1px;height:18px;background:#d6d6d6;"></div>
<div class="r" style="left:464px;top:653px;width:1px;height:18px;background:#d6d6d6;"></div>
<div class="r" style="left:557px;top:653px;width:1px;height:18px;background:#d6d6d6;"></div>
<div class="r" style="left:651px;top:653px;width:1px;height:18px;background:#d6d6d6;"></div>
<div class="r" style="left:744px;top:653px;width:1px;height:18px;background:#d6d6d6;"></div>
<div class="r" style="left:837px;top:653px;width:1px;height:18px;background:#d6d6d6;"></div>
<div class="r" style="left:931px;top:653px;width:1px;height:18px;background:#d6d6d6;"></div>
<div class="r" style="left:1024px;top:653px;width:1px;height:18px;background:#d6d6d6;"></div>
<div class="r" style="left:1117px;top:653px;width:1px;height:18px;background:#d6d6d6;"></div>
<div class="r" style="left:1211px;top:653px;width:1px;height:18px;background:#d6d6d6;"></div>
<div class="r" style="left:1304px;top:653px;width:1px;height:18px;background:#d6d6d6;"></div>
<div class="r" style="left:1397px;top:653px;width:1px;height:18px;background:#d6d6d6;"></div>
<div class="r" style="left:1491px;top:653px;width:1px;height:18px;background:#d6d6d6;"></div>
<div class="r" style="left:1584px;top:653px;width:1px;height:18px;background:#d6d6d6;"></div>
<div class="r" style="left:45px;top:287px;width:1px;height:17px;background:#d6d6d6;"></div>
<div class="r" style="left:45px;top:337px;width:1px;height:17px;background:#d6d6d6;"></div>
<div class="r" style="left:45px;top:370px;width:1px;height:18px;background:#d6d6d6;"></div>
<div class="r" style="left:45px;top:453px;width:1px;height:18px;background:#d6d6d6;"></div>
<div class="r" style="left:45px;top:487px;width:1px;height:17px;background:#d6d6d6;"></div>
<div class="r" style="left:45px;top:603px;width:1px;height:18px;background:#d6d6d6;"></div>
<div class="r" style="left:45.0px;top:336px;width:1554.5px;height:2px;background:#0f1a3c;"></div>
<div class="r" style="left:45.0px;top:352px;width:1554.5px;height:1px;background:#24335a;"></div>
<div class="r" style="left:45.0px;top:354px;width:1554.5px;height:1.5px;background:#3a4868;"></div>
<div class="r" style="left:45.0px;top:452px;width:1554.5px;height:2px;background:#0f1a3c;"></div>
<div class="r" style="left:45.0px;top:469px;width:1554.5px;height:1px;background:#24335a;"></div>
<div class="r" style="left:45.0px;top:471px;width:1554.5px;height:1.5px;background:#3a4868;"></div>
<div class="r" style="left:45.0px;top:602px;width:1554.5px;height:2px;background:#0f1a3c;"></div>
<div class="r" style="left:45.0px;top:619px;width:1554.5px;height:1px;background:#24335a;"></div>
<div class="r" style="left:45.0px;top:621px;width:1554.5px;height:1.5px;background:#3a4868;"></div>
<div class="r" style="left:277.7px;top:214px;width:1.4px;height:732px;background:#a9a9a9;"></div>
<div class="t " style="top:219.73px;font-size:17.8px;line-height:17.8px;color:#14213d;font-weight:bold;letter-spacing:0.099px;left:48.80px;">CASH FLOW FORECAST</div>
<div class="r" style="left:267px;top:227.6px;width:17px;height:2.2px;background:#14213d;"></div>
<div class="t " style="top:219.73px;font-size:17.8px;line-height:17.8px;color:#14213d;font-weight:bold;letter-spacing:-0.083px;left:288.75px;">24-Month Projection</div>
<div class="t " style="top:240.47px;font-size:11.5px;line-height:11.5px;color:#4aaed8;font-style:italic;letter-spacing:0.016px;left:48.00px;">Base Scenario</div>
<div class="t " style="top:290.26px;font-size:12.1px;line-height:12.1px;color:#1d2d52;font-weight:bold;-webkit-text-stroke:0.1px #1d2d52;left:48.00px;">CASH INFLOWS</div>
<div class="t " style="top:373.59px;font-size:12.1px;line-height:12.1px;color:#1d2d52;font-weight:bold;-webkit-text-stroke:0.1px #1d2d52;left:48.00px;">CASH OUTFLOWS</div>
<div class="t " style="top:490.26px;font-size:12.1px;line-height:12.1px;color:#1d2d52;font-weight:bold;-webkit-text-stroke:0.1px #1d2d52;left:48.00px;">NET CASH FLOW &amp; BALANCE</div>
<div class="t " style="top:307.33px;font-size:11.5px;line-height:11.5px;color:#359433;-webkit-text-stroke:0.15px #359433;left:48.00px;">Revenue</div>
<div class="t " style="top:307.38px;font-size:11.8px;line-height:11.8px;color:#359433;-webkit-text-stroke:0.15px #359433;right:1231.67px;">$198,069</div>
<div class="t " style="top:307.38px;font-size:11.8px;line-height:11.8px;color:#359433;-webkit-text-stroke:0.15px #359433;right:1138.33px;">$213,652</div>
<div class="t " style="top:307.38px;font-size:11.8px;line-height:11.8px;color:#359433;-webkit-text-stroke:0.15px #359433;right:1045.00px;">$211,823</div>
<div class="t " style="top:307.38px;font-size:11.8px;line-height:11.8px;color:#359433;-webkit-text-stroke:0.15px #359433;right:951.67px;">$193,482</div>
<div class="t " style="top:307.38px;font-size:11.8px;line-height:11.8px;color:#359433;-webkit-text-stroke:0.15px #359433;right:858.33px;">$208,943</div>
<div class="t " style="top:307.38px;font-size:11.8px;line-height:11.8px;color:#359433;-webkit-text-stroke:0.15px #359433;right:765.00px;">$232,495</div>
<div class="t " style="top:307.38px;font-size:11.8px;line-height:11.8px;color:#359433;-webkit-text-stroke:0.15px #359433;right:671.67px;">$253,619</div>
<div class="t " style="top:307.38px;font-size:11.8px;line-height:11.8px;color:#359433;-webkit-text-stroke:0.15px #359433;right:578.33px;">$325,729</div>
<div class="t " style="top:307.38px;font-size:11.8px;line-height:11.8px;color:#359433;-webkit-text-stroke:0.15px #359433;right:485.00px;">$408,377</div>
<div class="t " style="top:307.38px;font-size:11.8px;line-height:11.8px;color:#359433;-webkit-text-stroke:0.15px #359433;right:391.67px;">$200,898</div>
<div class="t " style="top:307.38px;font-size:11.8px;line-height:11.8px;color:#359433;-webkit-text-stroke:0.15px #359433;right:298.33px;">$206,234</div>
<div class="t " style="top:307.38px;font-size:11.8px;line-height:11.8px;color:#359433;-webkit-text-stroke:0.15px #359433;right:205.00px;">$238,082</div>
<div class="t " style="top:307.38px;font-size:11.8px;line-height:11.8px;color:#359433;-webkit-text-stroke:0.15px #359433;right:111.67px;">$275,890</div>
<div class="t " style="top:307.38px;font-size:11.8px;line-height:11.8px;color:#359433;-webkit-text-stroke:0.15px #359433;right:18.33px;">$297,872</div>
<div class="t " style="top:324.00px;font-size:11.5px;line-height:11.5px;color:#111;-webkit-text-stroke:0.15px #111;left:48.00px;">Ending Accounts Receivable</div>
<div class="t " style="top:324.04px;font-size:11.8px;line-height:11.8px;color:#111;-webkit-text-stroke:0.15px #111;right:1231.67px;">$198,069</div>
<div class="t " style="top:324.04px;font-size:11.8px;line-height:11.8px;color:#111;-webkit-text-stroke:0.15px #111;right:1138.33px;">$213,652</div>
<div class="t " style="top:324.04px;font-size:11.8px;line-height:11.8px;color:#111;-webkit-text-stroke:0.15px #111;right:1045.00px;">$211,823</div>
<div class="t " style="top:324.04px;font-size:11.8px;line-height:11.8px;color:#111;-webkit-text-stroke:0.15px #111;right:951.67px;">$193,482</div>
<div class="t " style="top:324.04px;font-size:11.8px;line-height:11.8px;color:#111;-webkit-text-stroke:0.15px #111;right:858.33px;">$208,943</div>
<div class="t " style="top:324.04px;font-size:11.8px;line-height:11.8px;color:#111;-webkit-text-stroke:0.15px #111;right:765.00px;">$232,495</div>
<div class="t " style="top:324.04px;font-size:11.8px;line-height:11.8px;color:#111;-webkit-text-stroke:0.15px #111;right:671.67px;">$253,619</div>
<div class="t " style="top:324.04px;font-size:11.8px;line-height:11.8px;color:#111;-webkit-text-stroke:0.15px #111;right:578.33px;">$325,729</div>
<div class="t " style="top:324.04px;font-size:11.8px;line-height:11.8px;color:#111;-webkit-text-stroke:0.15px #111;right:485.00px;">$408,377</div>
<div class="t " style="top:324.04px;font-size:11.8px;line-height:11.8px;color:#111;-webkit-text-stroke:0.15px #111;right:391.67px;">$200,898</div>
<div class="t " style="top:324.04px;font-size:11.8px;line-height:11.8px;color:#111;-webkit-text-stroke:0.15px #111;right:298.33px;">$206,234</div>
<div class="t " style="top:324.04px;font-size:11.8px;line-height:11.8px;color:#111;-webkit-text-stroke:0.15px #111;right:205.00px;">$238,082</div>
<div class="t " style="top:324.04px;font-size:11.8px;line-height:11.8px;color:#111;-webkit-text-stroke:0.15px #111;right:111.67px;">$275,890</div>
<div class="t " style="top:324.04px;font-size:11.8px;line-height:11.8px;color:#111;-webkit-text-stroke:0.15px #111;right:18.33px;">$297,872</div>
<div class="t " style="top:340.83px;font-size:11.3px;line-height:11.3px;color:#1d2d52;font-weight:bold;-webkit-text-stroke:0.15px #1d2d52;left:48.00px;">Cash Collections</div>
<div class="t " style="top:340.71px;font-size:11.8px;line-height:11.8px;color:#1d2d52;font-weight:bold;-webkit-text-stroke:0.15px #1d2d52;right:1231.67px;">$55,000</div>
<div class="t " style="top:340.71px;font-size:11.8px;line-height:11.8px;color:#1d2d52;font-weight:bold;-webkit-text-stroke:0.15px #1d2d52;right:1138.33px;">$198,069</div>
<div class="t " style="top:340.71px;font-size:11.8px;line-height:11.8px;color:#1d2d52;font-weight:bold;-webkit-text-stroke:0.15px #1d2d52;right:1045.00px;">$213,652</div>
<div class="t " style="top:340.71px;font-size:11.8px;line-height:11.8px;color:#1d2d52;font-weight:bold;-webkit-text-stroke:0.15px #1d2d52;right:951.67px;">$211,823</div>
<div class="t " style="top:340.71px;font-size:11.8px;line-height:11.8px;color:#1d2d52;font-weight:bold;-webkit-text-stroke:0.15px #1d2d52;right:858.33px;">$193,482</div>
<div class="t " style="top:340.71px;font-size:11.8px;line-height:11.8px;color:#1d2d52;font-weight:bold;-webkit-text-stroke:0.15px #1d2d52;right:765.00px;">$208,943</div>
<div class="t " style="top:340.71px;font-size:11.8px;line-height:11.8px;color:#1d2d52;font-weight:bold;-webkit-text-stroke:0.15px #1d2d52;right:671.67px;">$232,495</div>
<div class="t " style="top:340.71px;font-size:11.8px;line-height:11.8px;color:#1d2d52;font-weight:bold;-webkit-text-stroke:0.15px #1d2d52;right:578.33px;">$253,619</div>
<div class="t " style="top:340.71px;font-size:11.8px;line-height:11.8px;color:#1d2d52;font-weight:bold;-webkit-text-stroke:0.15px #1d2d52;right:485.00px;">$325,729</div>
<div class="t " style="top:340.71px;font-size:11.8px;line-height:11.8px;color:#1d2d52;font-weight:bold;-webkit-text-stroke:0.15px #1d2d52;right:391.67px;">$408,377</div>
<div class="t " style="top:340.71px;font-size:11.8px;line-height:11.8px;color:#1d2d52;font-weight:bold;-webkit-text-stroke:0.15px #1d2d52;right:298.33px;">$200,898</div>
<div class="t " style="top:340.71px;font-size:11.8px;line-height:11.8px;color:#1d2d52;font-weight:bold;-webkit-text-stroke:0.15px #1d2d52;right:205.00px;">$206,234</div>
<div class="t " style="top:340.71px;font-size:11.8px;line-height:11.8px;color:#1d2d52;font-weight:bold;-webkit-text-stroke:0.15px #1d2d52;right:111.67px;">$238,082</div>
<div class="t " style="top:340.71px;font-size:11.8px;line-height:11.8px;color:#1d2d52;font-weight:bold;-webkit-text-stroke:0.15px #1d2d52;right:18.33px;">$275,890</div>
<div class="t " style="top:390.67px;font-size:11.5px;line-height:11.5px;color:#359433;-webkit-text-stroke:0.15px #359433;left:48.00px;">Inventory Purchases</div>
<div class="t " style="top:390.71px;font-size:11.8px;line-height:11.8px;color:#359433;-webkit-text-stroke:0.15px #359433;right:1231.67px;">$136,690</div>
<div class="t " style="top:390.71px;font-size:11.8px;line-height:11.8px;color:#359433;-webkit-text-stroke:0.15px #359433;right:1138.33px;">$102,193</div>
<div class="t " style="top:390.71px;font-size:11.8px;line-height:11.8px;color:#359433;-webkit-text-stroke:0.15px #359433;right:1045.00px;">$91,757</div>
<div class="t " style="top:390.71px;font-size:11.8px;line-height:11.8px;color:#359433;-webkit-text-stroke:0.15px #359433;right:951.67px;">$103,804</div>
<div class="t " style="top:390.71px;font-size:11.8px;line-height:11.8px;color:#359433;-webkit-text-stroke:0.15px #359433;right:858.33px;">$115,432</div>
<div class="t " style="top:390.71px;font-size:11.8px;line-height:11.8px;color:#359433;-webkit-text-stroke:0.15px #359433;right:765.00px;">$126,354</div>
<div class="t " style="top:390.71px;font-size:11.8px;line-height:11.8px;color:#359433;-webkit-text-stroke:0.15px #359433;right:671.67px;">$167,657</div>
<div class="t " style="top:390.71px;font-size:11.8px;line-height:11.8px;color:#359433;-webkit-text-stroke:0.15px #359433;right:578.33px;">$208,574</div>
<div class="t " style="top:390.71px;font-size:11.8px;line-height:11.8px;color:#359433;-webkit-text-stroke:0.15px #359433;right:485.00px;">$74,704</div>
<div class="t " style="top:390.71px;font-size:11.8px;line-height:11.8px;color:#359433;-webkit-text-stroke:0.15px #359433;right:391.67px;">$99,346</div>
<div class="t " style="top:390.71px;font-size:11.8px;line-height:11.8px;color:#359433;-webkit-text-stroke:0.15px #359433;right:298.33px;">$119,354</div>
<div class="t " style="top:390.71px;font-size:11.8px;line-height:11.8px;color:#359433;-webkit-text-stroke:0.15px #359433;right:205.00px;">$137,583</div>
<div class="t " style="top:390.71px;font-size:11.8px;line-height:11.8px;color:#359433;-webkit-text-stroke:0.15px #359433;right:111.67px;">$145,104</div>
<div class="t " style="top:390.71px;font-size:11.8px;line-height:11.8px;color:#359433;-webkit-text-stroke:0.15px #359433;right:18.33px;">$141,976</div>
<div class="t " style="top:407.33px;font-size:11.5px;line-height:11.5px;color:#111;-webkit-text-stroke:0.15px #111;left:48.00px;">Ending Accounts Payable</div>
<div class="t " style="top:407.38px;font-size:11.8px;line-height:11.8px;color:#111;-webkit-text-stroke:0.15px #111;right:1231.67px;">$205,036</div>
<div class="t " style="top:407.38px;font-size:11.8px;line-height:11.8px;color:#111;-webkit-text-stroke:0.15px #111;right:1138.33px;">$153,290</div>
<div class="t " style="top:407.38px;font-size:11.8px;line-height:11.8px;color:#111;-webkit-text-stroke:0.15px #111;right:1045.00px;">$137,635</div>
<div class="t " style="top:407.38px;font-size:11.8px;line-height:11.8px;color:#111;-webkit-text-stroke:0.15px #111;right:951.67px;">$155,707</div>
<div class="t " style="top:407.38px;font-size:11.8px;line-height:11.8px;color:#111;-webkit-text-stroke:0.15px #111;right:858.33px;">$173,148</div>
<div class="t " style="top:407.38px;font-size:11.8px;line-height:11.8px;color:#111;-webkit-text-stroke:0.15px #111;right:765.00px;">$189,531</div>
<div class="t " style="top:407.38px;font-size:11.8px;line-height:11.8px;color:#111;-webkit-text-stroke:0.15px #111;right:671.67px;">$251,486</div>
<div class="t " style="top:407.38px;font-size:11.8px;line-height:11.8px;color:#111;-webkit-text-stroke:0.15px #111;right:578.33px;">$312,862</div>
<div class="t " style="top:407.38px;font-size:11.8px;line-height:11.8px;color:#111;-webkit-text-stroke:0.15px #111;right:485.00px;">$112,056</div>
<div class="t " style="top:407.38px;font-size:11.8px;line-height:11.8px;color:#111;-webkit-text-stroke:0.15px #111;right:391.67px;">$149,019</div>
<div class="t " style="top:407.38px;font-size:11.8px;line-height:11.8px;color:#111;-webkit-text-stroke:0.15px #111;right:298.33px;">$179,031</div>
<div class="t " style="top:407.38px;font-size:11.8px;line-height:11.8px;color:#111;-webkit-text-stroke:0.15px #111;right:205.00px;">$206,374</div>
<div class="t " style="top:407.38px;font-size:11.8px;line-height:11.8px;color:#111;-webkit-text-stroke:0.15px #111;right:111.67px;">$217,657</div>
<div class="t " style="top:407.38px;font-size:11.8px;line-height:11.8px;color:#111;-webkit-text-stroke:0.15px #111;right:18.33px;">$212,965</div>
<div class="t " style="top:424.00px;font-size:11.5px;line-height:11.5px;color:#111;-webkit-text-stroke:0.15px #111;left:48.00px;">Cash Paid for Inventory</div>
<div class="t " style="top:424.04px;font-size:11.8px;line-height:11.8px;color:#111;-webkit-text-stroke:0.15px #111;right:1229.87px;">($28,345)</div>
<div class="t " style="top:424.04px;font-size:11.8px;line-height:11.8px;color:#111;-webkit-text-stroke:0.15px #111;right:1138.33px;">$153,939</div>
<div class="t " style="top:424.04px;font-size:11.8px;line-height:11.8px;color:#111;-webkit-text-stroke:0.15px #111;right:1045.00px;">$107,411</div>
<div class="t " style="top:424.04px;font-size:11.8px;line-height:11.8px;color:#111;-webkit-text-stroke:0.15px #111;right:951.67px;">$85,733</div>
<div class="t " style="top:424.04px;font-size:11.8px;line-height:11.8px;color:#111;-webkit-text-stroke:0.15px #111;right:858.33px;">$97,991</div>
<div class="t " style="top:424.04px;font-size:11.8px;line-height:11.8px;color:#111;-webkit-text-stroke:0.15px #111;right:765.00px;">$109,971</div>
<div class="t " style="top:424.04px;font-size:11.8px;line-height:11.8px;color:#111;-webkit-text-stroke:0.15px #111;right:671.67px;">$105,702</div>
<div class="t " style="top:424.04px;font-size:11.8px;line-height:11.8px;color:#111;-webkit-text-stroke:0.15px #111;right:578.33px;">$147,198</div>
<div class="t " style="top:424.04px;font-size:11.8px;line-height:11.8px;color:#111;-webkit-text-stroke:0.15px #111;right:485.00px;">$275,510</div>
<div class="t " style="top:424.04px;font-size:11.8px;line-height:11.8px;color:#111;-webkit-text-stroke:0.15px #111;right:391.67px;">$62,384</div>
<div class="t " style="top:424.04px;font-size:11.8px;line-height:11.8px;color:#111;-webkit-text-stroke:0.15px #111;right:298.33px;">$89,342</div>
<div class="t " style="top:424.04px;font-size:11.8px;line-height:11.8px;color:#111;-webkit-text-stroke:0.15px #111;right:205.00px;">$110,239</div>
<div class="t " style="top:424.04px;font-size:11.8px;line-height:11.8px;color:#111;-webkit-text-stroke:0.15px #111;right:111.67px;">$133,822</div>
<div class="t " style="top:424.04px;font-size:11.8px;line-height:11.8px;color:#111;-webkit-text-stroke:0.15px #111;right:18.33px;">$146,668</div>
<div class="t " style="top:440.67px;font-size:11.5px;line-height:11.5px;color:#359433;-webkit-text-stroke:0.15px #359433;left:48.00px;">Operating Expenses</div>
<div class="t " style="top:440.71px;font-size:11.8px;line-height:11.8px;color:#359433;-webkit-text-stroke:0.15px #359433;right:1231.67px;">$55,000</div>
<div class="t " style="top:440.71px;font-size:11.8px;line-height:11.8px;color:#359433;-webkit-text-stroke:0.15px #359433;right:1138.33px;">$55,000</div>
<div class="t " style="top:440.71px;font-size:11.8px;line-height:11.8px;color:#359433;-webkit-text-stroke:0.15px #359433;right:1045.00px;">$55,000</div>
<div class="t " style="top:440.71px;font-size:11.8px;line-height:11.8px;color:#359433;-webkit-text-stroke:0.15px #359433;right:951.67px;">$55,000</div>
<div class="t " style="top:440.71px;font-size:11.8px;line-height:11.8px;color:#359433;-webkit-text-stroke:0.15px #359433;right:858.33px;">$55,000</div>
<div class="t " style="top:440.71px;font-size:11.8px;line-height:11.8px;color:#359433;-webkit-text-stroke:0.15px #359433;right:765.00px;">$55,000</div>
<div class="t " style="top:440.71px;font-size:11.8px;line-height:11.8px;color:#359433;-webkit-text-stroke:0.15px #359433;right:671.67px;">$55,000</div>
<div class="t " style="top:440.71px;font-size:11.8px;line-height:11.8px;color:#359433;-webkit-text-stroke:0.15px #359433;right:578.33px;">$55,000</div>
<div class="t " style="top:440.71px;font-size:11.8px;line-height:11.8px;color:#359433;-webkit-text-stroke:0.15px #359433;right:485.00px;">$55,000</div>
<div class="t " style="top:440.71px;font-size:11.8px;line-height:11.8px;color:#359433;-webkit-text-stroke:0.15px #359433;right:391.67px;">$55,000</div>
<div class="t " style="top:440.71px;font-size:11.8px;line-height:11.8px;color:#359433;-webkit-text-stroke:0.15px #359433;right:298.33px;">$55,000</div>
<div class="t " style="top:440.71px;font-size:11.8px;line-height:11.8px;color:#359433;-webkit-text-stroke:0.15px #359433;right:205.00px;">$55,000</div>
<div class="t " style="top:440.71px;font-size:11.8px;line-height:11.8px;color:#359433;-webkit-text-stroke:0.15px #359433;right:111.67px;">$55,000</div>
<div class="t " style="top:440.71px;font-size:11.8px;line-height:11.8px;color:#359433;-webkit-text-stroke:0.15px #359433;right:18.33px;">$55,000</div>
<div class="t " style="top:457.50px;font-size:11.3px;line-height:11.3px;color:#1d2d52;font-weight:bold;-webkit-text-stroke:0.15px #1d2d52;left:48.00px;">Total Cash Outflows</div>
<div class="t " style="top:457.38px;font-size:11.8px;line-height:11.8px;color:#1d2d52;font-weight:bold;-webkit-text-stroke:0.15px #1d2d52;right:1231.67px;">$26,655</div>
<div class="t " style="top:457.38px;font-size:11.8px;line-height:11.8px;color:#1d2d52;font-weight:bold;-webkit-text-stroke:0.15px #1d2d52;right:1138.33px;">$208,939</div>
<div class="t " style="top:457.38px;font-size:11.8px;line-height:11.8px;color:#1d2d52;font-weight:bold;-webkit-text-stroke:0.15px #1d2d52;right:1045.00px;">$162,411</div>
<div class="t " style="top:457.38px;font-size:11.8px;line-height:11.8px;color:#1d2d52;font-weight:bold;-webkit-text-stroke:0.15px #1d2d52;right:951.67px;">$140,733</div>
<div class="t " style="top:457.38px;font-size:11.8px;line-height:11.8px;color:#1d2d52;font-weight:bold;-webkit-text-stroke:0.15px #1d2d52;right:858.33px;">$152,991</div>
<div class="t " style="top:457.38px;font-size:11.8px;line-height:11.8px;color:#1d2d52;font-weight:bold;-webkit-text-stroke:0.15px #1d2d52;right:765.00px;">$164,971</div>
<div class="t " style="top:457.38px;font-size:11.8px;line-height:11.8px;color:#1d2d52;font-weight:bold;-webkit-text-stroke:0.15px #1d2d52;right:671.67px;">$160,702</div>
<div class="t " style="top:457.38px;font-size:11.8px;line-height:11.8px;color:#1d2d52;font-weight:bold;-webkit-text-stroke:0.15px #1d2d52;right:578.33px;">$202,198</div>
<div class="t " style="top:457.38px;font-size:11.8px;line-height:11.8px;color:#1d2d52;font-weight:bold;-webkit-text-stroke:0.15px #1d2d52;right:485.00px;">$330,510</div>
<div class="t " style="top:457.38px;font-size:11.8px;line-height:11.8px;color:#1d2d52;font-weight:bold;-webkit-text-stroke:0.15px #1d2d52;right:391.67px;">$117,384</div>
<div class="t " style="top:457.38px;font-size:11.8px;line-height:11.8px;color:#1d2d52;font-weight:bold;-webkit-text-stroke:0.15px #1d2d52;right:298.33px;">$144,342</div>
<div class="t " style="top:457.38px;font-size:11.8px;line-height:11.8px;color:#1d2d52;font-weight:bold;-webkit-text-stroke:0.15px #1d2d52;right:205.00px;">$165,239</div>
<div class="t " style="top:457.38px;font-size:11.8px;line-height:11.8px;color:#1d2d52;font-weight:bold;-webkit-text-stroke:0.15px #1d2d52;right:111.67px;">$188,822</div>
<div class="t " style="top:457.38px;font-size:11.8px;line-height:11.8px;color:#1d2d52;font-weight:bold;-webkit-text-stroke:0.15px #1d2d52;right:18.33px;">$201,668</div>
<div class="t " style="top:507.50px;font-size:11.3px;line-height:11.3px;color:#1d2d52;font-weight:bold;-webkit-text-stroke:0.15px #1d2d52;left:48.00px;">Net Operating Cash Flow</div>
<div class="t " style="top:507.38px;font-size:11.8px;line-height:11.8px;color:#1d2d52;font-weight:bold;-webkit-text-stroke:0.15px #1d2d52;right:1231.67px;">$28,345</div>
<div class="t " style="top:507.38px;font-size:11.8px;line-height:11.8px;color:#1d2d52;font-weight:bold;-webkit-text-stroke:0.15px #1d2d52;right:1136.53px;">($10,871)</div>
<div class="t " style="top:507.38px;font-size:11.8px;line-height:11.8px;color:#1d2d52;font-weight:bold;-webkit-text-stroke:0.15px #1d2d52;right:1045.00px;">$51,241</div>
<div class="t " style="top:507.38px;font-size:11.8px;line-height:11.8px;color:#1d2d52;font-weight:bold;-webkit-text-stroke:0.15px #1d2d52;right:951.67px;">$71,090</div>
<div class="t " style="top:507.38px;font-size:11.8px;line-height:11.8px;color:#1d2d52;font-weight:bold;-webkit-text-stroke:0.15px #1d2d52;right:858.33px;">$40,492</div>
<div class="t " style="top:507.38px;font-size:11.8px;line-height:11.8px;color:#1d2d52;font-weight:bold;-webkit-text-stroke:0.15px #1d2d52;right:765.00px;">$43,972</div>
<div class="t " style="top:507.38px;font-size:11.8px;line-height:11.8px;color:#1d2d52;font-weight:bold;-webkit-text-stroke:0.15px #1d2d52;right:671.67px;">$71,793</div>
<div class="t " style="top:507.38px;font-size:11.8px;line-height:11.8px;color:#1d2d52;font-weight:bold;-webkit-text-stroke:0.15px #1d2d52;right:578.33px;">$51,421</div>
<div class="t " style="top:507.38px;font-size:11.8px;line-height:11.8px;color:#1d2d52;font-weight:bold;-webkit-text-stroke:0.15px #1d2d52;right:483.20px;">($4,780)</div>
<div class="t " style="top:507.38px;font-size:11.8px;line-height:11.8px;color:#1d2d52;font-weight:bold;-webkit-text-stroke:0.15px #1d2d52;right:391.67px;">$290,993</div>
<div class="t " style="top:507.38px;font-size:11.8px;line-height:11.8px;color:#1d2d52;font-weight:bold;-webkit-text-stroke:0.15px #1d2d52;right:298.33px;">$56,557</div>
<div class="t " style="top:507.38px;font-size:11.8px;line-height:11.8px;color:#1d2d52;font-weight:bold;-webkit-text-stroke:0.15px #1d2d52;right:205.00px;">$40,995</div>
<div class="t " style="top:507.38px;font-size:11.8px;line-height:11.8px;color:#1d2d52;font-weight:bold;-webkit-text-stroke:0.15px #1d2d52;right:111.67px;">$49,260</div>
<div class="t " style="top:507.38px;font-size:11.8px;line-height:11.8px;color:#1d2d52;font-weight:bold;-webkit-text-stroke:0.15px #1d2d52;right:18.33px;">$74,222</div>
<div class="t " style="top:524.00px;font-size:11.5px;line-height:11.5px;color:#111;-webkit-text-stroke:0.15px #111;left:48.00px;">Gross Profit</div>
<div class="t " style="top:524.04px;font-size:11.8px;line-height:11.8px;color:#111;-webkit-text-stroke:0.15px #111;right:1231.67px;">$102,140</div>
<div class="t " style="top:524.04px;font-size:11.8px;line-height:11.8px;color:#111;-webkit-text-stroke:0.15px #111;right:1138.33px;">$110,142</div>
<div class="t " style="top:524.04px;font-size:11.8px;line-height:11.8px;color:#111;-webkit-text-stroke:0.15px #111;right:1045.00px;">$109,075</div>
<div class="t " style="top:524.04px;font-size:11.8px;line-height:11.8px;color:#111;-webkit-text-stroke:0.15px #111;right:951.67px;">$99,647</div>
<div class="t " style="top:524.04px;font-size:11.8px;line-height:11.8px;color:#111;-webkit-text-stroke:0.15px #111;right:858.33px;">$107,168</div>
<div class="t " style="top:524.04px;font-size:11.8px;line-height:11.8px;color:#111;-webkit-text-stroke:0.15px #111;right:765.00px;">$119,263</div>
<div class="t " style="top:524.04px;font-size:11.8px;line-height:11.8px;color:#111;-webkit-text-stroke:0.15px #111;right:671.67px;">$129,807</div>
<div class="t " style="top:524.04px;font-size:11.8px;line-height:11.8px;color:#111;-webkit-text-stroke:0.15px #111;right:578.33px;">$166,456</div>
<div class="t " style="top:524.04px;font-size:11.8px;line-height:11.8px;color:#111;-webkit-text-stroke:0.15px #111;right:485.00px;">$208,853</div>
<div class="t " style="top:524.04px;font-size:11.8px;line-height:11.8px;color:#111;-webkit-text-stroke:0.15px #111;right:391.67px;">$103,927</div>
<div class="t " style="top:524.04px;font-size:11.8px;line-height:11.8px;color:#111;-webkit-text-stroke:0.15px #111;right:298.33px;">$106,897</div>
<div class="t " style="top:524.04px;font-size:11.8px;line-height:11.8px;color:#111;-webkit-text-stroke:0.15px #111;right:205.00px;">$122,990</div>
<div class="t " style="top:524.04px;font-size:11.8px;line-height:11.8px;color:#111;-webkit-text-stroke:0.15px #111;right:111.67px;">$142,507</div>
<div class="t " style="top:524.04px;font-size:11.8px;line-height:11.8px;color:#111;-webkit-text-stroke:0.15px #111;right:18.33px;">$153,850</div>
<div class="t " style="top:540.67px;font-size:11.5px;line-height:11.5px;color:#111;-webkit-text-stroke:0.15px #111;left:48.00px;">Gross Margin %</div>
<div class="t " style="top:540.71px;font-size:11.8px;line-height:11.8px;color:#111;-webkit-text-stroke:0.15px #111;right:1231.67px;">51.6%</div>
<div class="t " style="top:540.71px;font-size:11.8px;line-height:11.8px;color:#111;-webkit-text-stroke:0.15px #111;right:1138.33px;">51.6%</div>
<div class="t " style="top:540.71px;font-size:11.8px;line-height:11.8px;color:#111;-webkit-text-stroke:0.15px #111;right:1045.00px;">51.5%</div>
<div class="t " style="top:540.71px;font-size:11.8px;line-height:11.8px;color:#111;-webkit-text-stroke:0.15px #111;right:951.67px;">51.5%</div>
<div class="t " style="top:540.71px;font-size:11.8px;line-height:11.8px;color:#111;-webkit-text-stroke:0.15px #111;right:858.33px;">51.3%</div>
<div class="t " style="top:540.71px;font-size:11.8px;line-height:11.8px;color:#111;-webkit-text-stroke:0.15px #111;right:765.00px;">51.3%</div>
<div class="t " style="top:540.71px;font-size:11.8px;line-height:11.8px;color:#111;-webkit-text-stroke:0.15px #111;right:671.67px;">51.2%</div>
<div class="t " style="top:540.71px;font-size:11.8px;line-height:11.8px;color:#111;-webkit-text-stroke:0.15px #111;right:578.33px;">51.1%</div>
<div class="t " style="top:540.71px;font-size:11.8px;line-height:11.8px;color:#111;-webkit-text-stroke:0.15px #111;right:485.00px;">51.1%</div>
<div class="t " style="top:540.71px;font-size:11.8px;line-height:11.8px;color:#111;-webkit-text-stroke:0.15px #111;right:391.67px;">51.7%</div>
<div class="t " style="top:540.71px;font-size:11.8px;line-height:11.8px;color:#111;-webkit-text-stroke:0.15px #111;right:298.33px;">51.8%</div>
<div class="t " style="top:540.71px;font-size:11.8px;line-height:11.8px;color:#111;-webkit-text-stroke:0.15px #111;right:205.00px;">51.7%</div>
<div class="t " style="top:540.71px;font-size:11.8px;line-height:11.8px;color:#111;-webkit-text-stroke:0.15px #111;right:111.67px;">51.7%</div>
<div class="t " style="top:540.71px;font-size:11.8px;line-height:11.8px;color:#111;-webkit-text-stroke:0.15px #111;right:18.33px;">51.6%</div>
<div class="t " style="top:574.17px;font-size:11.3px;line-height:11.3px;color:#4e5d7a;font-weight:bold;-webkit-text-stroke:0.15px #4e5d7a;left:48.00px;">Beginning Cash Balance</div>
<div class="t " style="top:574.04px;font-size:11.8px;line-height:11.8px;color:#111;-webkit-text-stroke:0.15px #111;right:1231.67px;">$150,000</div>
<div class="t " style="top:574.04px;font-size:11.8px;line-height:11.8px;color:#111;-webkit-text-stroke:0.15px #111;right:1138.33px;">$178,345</div>
<div class="t " style="top:574.04px;font-size:11.8px;line-height:11.8px;color:#111;-webkit-text-stroke:0.15px #111;right:1045.00px;">$167,475</div>
<div class="t " style="top:574.04px;font-size:11.8px;line-height:11.8px;color:#111;-webkit-text-stroke:0.15px #111;right:951.67px;">$218,715</div>
<div class="t " style="top:574.04px;font-size:11.8px;line-height:11.8px;color:#111;-webkit-text-stroke:0.15px #111;right:858.33px;">$289,806</div>
<div class="t " style="top:574.04px;font-size:11.8px;line-height:11.8px;color:#111;-webkit-text-stroke:0.15px #111;right:765.00px;">$330,297</div>
<div class="t " style="top:574.04px;font-size:11.8px;line-height:11.8px;color:#111;-webkit-text-stroke:0.15px #111;right:671.67px;">$374,270</div>
<div class="t " style="top:574.04px;font-size:11.8px;line-height:11.8px;color:#111;-webkit-text-stroke:0.15px #111;right:578.33px;">$446,063</div>
<div class="t " style="top:574.04px;font-size:11.8px;line-height:11.8px;color:#111;-webkit-text-stroke:0.15px #111;right:485.00px;">$497,483</div>
<div class="t " style="top:574.04px;font-size:11.8px;line-height:11.8px;color:#111;-webkit-text-stroke:0.15px #111;right:391.67px;">$492,703</div>
<div class="t " style="top:574.04px;font-size:11.8px;line-height:11.8px;color:#111;-webkit-text-stroke:0.15px #111;right:298.33px;">$783,696</div>
<div class="t " style="top:574.04px;font-size:11.8px;line-height:11.8px;color:#111;-webkit-text-stroke:0.15px #111;right:205.00px;">$840,253</div>
<div class="t " style="top:574.04px;font-size:11.8px;line-height:11.8px;color:#111;-webkit-text-stroke:0.15px #111;right:111.67px;">$881,248</div>
<div class="t " style="top:574.04px;font-size:11.8px;line-height:11.8px;color:#111;-webkit-text-stroke:0.15px #111;right:18.33px;">$930,507</div>
<div class="t " style="top:590.67px;font-size:11.5px;line-height:11.5px;color:#111;-webkit-text-stroke:0.15px #111;left:48.00px;">Net Operating Cash Flow</div>
<div class="t " style="top:590.71px;font-size:11.8px;line-height:11.8px;color:#111;-webkit-text-stroke:0.15px #111;right:1231.67px;">$28,345</div>
<div class="t " style="top:590.71px;font-size:11.8px;line-height:11.8px;color:#111;-webkit-text-stroke:0.15px #111;right:1136.53px;">($10,871)</div>
<div class="t " style="top:590.71px;font-size:11.8px;line-height:11.8px;color:#111;-webkit-text-stroke:0.15px #111;right:1045.00px;">$51,241</div>
<div class="t " style="top:590.71px;font-size:11.8px;line-height:11.8px;color:#111;-webkit-text-stroke:0.15px #111;right:951.67px;">$71,090</div>
<div class="t " style="top:590.71px;font-size:11.8px;line-height:11.8px;color:#111;-webkit-text-stroke:0.15px #111;right:858.33px;">$40,492</div>
<div class="t " style="top:590.71px;font-size:11.8px;line-height:11.8px;color:#111;-webkit-text-stroke:0.15px #111;right:765.00px;">$43,972</div>
<div class="t " style="top:590.71px;font-size:11.8px;line-height:11.8px;color:#111;-webkit-text-stroke:0.15px #111;right:671.67px;">$71,793</div>
<div class="t " style="top:590.71px;font-size:11.8px;line-height:11.8px;color:#111;-webkit-text-stroke:0.15px #111;right:578.33px;">$51,421</div>
<div class="t " style="top:590.71px;font-size:11.8px;line-height:11.8px;color:#111;-webkit-text-stroke:0.15px #111;right:483.20px;">($4,780)</div>
<div class="t " style="top:590.71px;font-size:11.8px;line-height:11.8px;color:#111;-webkit-text-stroke:0.15px #111;right:391.67px;">$290,993</div>
<div class="t " style="top:590.71px;font-size:11.8px;line-height:11.8px;color:#111;-webkit-text-stroke:0.15px #111;right:298.33px;">$56,557</div>
<div class="t " style="top:590.71px;font-size:11.8px;line-height:11.8px;color:#111;-webkit-text-stroke:0.15px #111;right:205.00px;">$40,995</div>
<div class="t " style="top:590.71px;font-size:11.8px;line-height:11.8px;color:#111;-webkit-text-stroke:0.15px #111;right:111.67px;">$49,260</div>
<div class="t " style="top:590.71px;font-size:11.8px;line-height:11.8px;color:#111;-webkit-text-stroke:0.15px #111;right:18.33px;">$74,222</div>
<div class="t " style="top:607.50px;font-size:11.3px;line-height:11.3px;color:#1d2d52;font-weight:bold;-webkit-text-stroke:0.15px #1d2d52;left:48.00px;">Ending Cash Balance</div>
<div class="t " style="top:607.38px;font-size:11.8px;line-height:11.8px;color:#1d2d52;font-weight:bold;-webkit-text-stroke:0.15px #1d2d52;right:1231.67px;">$178,345</div>
<div class="t " style="top:607.38px;font-size:11.8px;line-height:11.8px;color:#1d2d52;font-weight:bold;-webkit-text-stroke:0.15px #1d2d52;right:1138.33px;">$167,475</div>
<div class="t " style="top:607.38px;font-size:11.8px;line-height:11.8px;color:#1d2d52;font-weight:bold;-webkit-text-stroke:0.15px #1d2d52;right:1045.00px;">$218,715</div>
<div class="t " style="top:607.38px;font-size:11.8px;line-height:11.8px;color:#1d2d52;font-weight:bold;-webkit-text-stroke:0.15px #1d2d52;right:951.67px;">$289,806</div>
<div class="t " style="top:607.38px;font-size:11.8px;line-height:11.8px;color:#1d2d52;font-weight:bold;-webkit-text-stroke:0.15px #1d2d52;right:858.33px;">$330,297</div>
<div class="t " style="top:607.38px;font-size:11.8px;line-height:11.8px;color:#1d2d52;font-weight:bold;-webkit-text-stroke:0.15px #1d2d52;right:765.00px;">$374,270</div>
<div class="t " style="top:607.38px;font-size:11.8px;line-height:11.8px;color:#1d2d52;font-weight:bold;-webkit-text-stroke:0.15px #1d2d52;right:671.67px;">$446,063</div>
<div class="t " style="top:607.38px;font-size:11.8px;line-height:11.8px;color:#1d2d52;font-weight:bold;-webkit-text-stroke:0.15px #1d2d52;right:578.33px;">$497,483</div>
<div class="t " style="top:607.38px;font-size:11.8px;line-height:11.8px;color:#1d2d52;font-weight:bold;-webkit-text-stroke:0.15px #1d2d52;right:485.00px;">$492,703</div>
<div class="t " style="top:607.38px;font-size:11.8px;line-height:11.8px;color:#1d2d52;font-weight:bold;-webkit-text-stroke:0.15px #1d2d52;right:391.67px;">$783,696</div>
<div class="t " style="top:607.38px;font-size:11.8px;line-height:11.8px;color:#1d2d52;font-weight:bold;-webkit-text-stroke:0.15px #1d2d52;right:298.33px;">$840,253</div>
<div class="t " style="top:607.38px;font-size:11.8px;line-height:11.8px;color:#1d2d52;font-weight:bold;-webkit-text-stroke:0.15px #1d2d52;right:205.00px;">$881,248</div>
<div class="t " style="top:607.38px;font-size:11.8px;line-height:11.8px;color:#1d2d52;font-weight:bold;-webkit-text-stroke:0.15px #1d2d52;right:111.67px;">$930,507</div>
<div class="t " style="top:607.38px;font-size:11.8px;line-height:11.8px;color:#1d2d52;font-weight:bold;-webkit-text-stroke:0.15px #1d2d52;right:18.33px;">$1,004,729</div>
<div class="t " style="top:640.83px;font-size:11.3px;line-height:11.3px;color:#4e5d7a;font-weight:bold;-webkit-text-stroke:0.15px #4e5d7a;left:48.00px;">Cash Runway (months)</div>
<div class="t " style="top:640.71px;font-size:11.8px;line-height:11.8px;color:#111;-webkit-text-stroke:0.15px #111;right:1231.67px;">6.7</div>
<div class="t " style="top:640.71px;font-size:11.8px;line-height:11.8px;color:#111;-webkit-text-stroke:0.15px #111;right:1138.33px;">0.8</div>
<div class="t " style="top:640.71px;font-size:11.8px;line-height:11.8px;color:#111;-webkit-text-stroke:0.15px #111;right:1045.00px;">1.3</div>
<div class="t " style="top:640.71px;font-size:11.8px;line-height:11.8px;color:#111;-webkit-text-stroke:0.15px #111;right:951.67px;">2.1</div>
<div class="t " style="top:640.71px;font-size:11.8px;line-height:11.8px;color:#111;-webkit-text-stroke:0.15px #111;right:858.33px;">2.2</div>
<div class="t " style="top:640.71px;font-size:11.8px;line-height:11.8px;color:#111;-webkit-text-stroke:0.15px #111;right:765.00px;">2.3</div>
<div class="t " style="top:640.71px;font-size:11.8px;line-height:11.8px;color:#111;-webkit-text-stroke:0.15px #111;right:671.67px;">2.8</div>
<div class="t " style="top:640.71px;font-size:11.8px;line-height:11.8px;color:#111;-webkit-text-stroke:0.15px #111;right:578.33px;">2.5</div>
<div class="t " style="top:640.71px;font-size:11.8px;line-height:11.8px;color:#111;-webkit-text-stroke:0.15px #111;right:485.00px;">1.5</div>
<div class="t " style="top:640.71px;font-size:11.8px;line-height:11.8px;color:#111;-webkit-text-stroke:0.15px #111;right:391.67px;">6.7</div>
<div class="t " style="top:640.71px;font-size:11.8px;line-height:11.8px;color:#111;-webkit-text-stroke:0.15px #111;right:298.33px;">5.8</div>
<div class="t " style="top:640.71px;font-size:11.8px;line-height:11.8px;color:#111;-webkit-text-stroke:0.15px #111;right:205.00px;">5.3</div>
<div class="t " style="top:640.71px;font-size:11.8px;line-height:11.8px;color:#111;-webkit-text-stroke:0.15px #111;right:111.67px;">4.9</div>
<div class="t " style="top:640.71px;font-size:11.8px;line-height:11.8px;color:#111;-webkit-text-stroke:0.15px #111;right:18.33px;">5.0</div>
<div class="t " style="top:657.50px;font-size:11.3px;line-height:11.3px;color:#4e5d7a;font-weight:bold;-webkit-text-stroke:0.15px #4e5d7a;left:48.00px;">Cumulative Net Cash Flow</div>
<div class="t " style="top:657.38px;font-size:11.8px;line-height:11.8px;color:#111;-webkit-text-stroke:0.15px #111;right:1231.67px;">$28,345</div>
<div class="t " style="top:657.38px;font-size:11.8px;line-height:11.8px;color:#111;-webkit-text-stroke:0.15px #111;right:1138.33px;">$17,475</div>
<div class="t " style="top:657.38px;font-size:11.8px;line-height:11.8px;color:#111;-webkit-text-stroke:0.15px #111;right:1045.00px;">$68,715</div>
<div class="t " style="top:657.38px;font-size:11.8px;line-height:11.8px;color:#111;-webkit-text-stroke:0.15px #111;right:951.67px;">$139,806</div>
<div class="t " style="top:657.38px;font-size:11.8px;line-height:11.8px;color:#111;-webkit-text-stroke:0.15px #111;right:858.33px;">$180,297</div>
<div class="t " style="top:657.38px;font-size:11.8px;line-height:11.8px;color:#111;-webkit-text-stroke:0.15px #111;right:765.00px;">$224,270</div>
<div class="t " style="top:657.38px;font-size:11.8px;line-height:11.8px;color:#111;-webkit-text-stroke:0.15px #111;right:671.67px;">$296,063</div>
<div class="t " style="top:657.38px;font-size:11.8px;line-height:11.8px;color:#111;-webkit-text-stroke:0.15px #111;right:578.33px;">$347,483</div>
<div class="t " style="top:657.38px;font-size:11.8px;line-height:11.8px;color:#111;-webkit-text-stroke:0.15px #111;right:485.00px;">$342,703</div>
<div class="t " style="top:657.38px;font-size:11.8px;line-height:11.8px;color:#111;-webkit-text-stroke:0.15px #111;right:391.67px;">$633,696</div>
<div class="t " style="top:657.38px;font-size:11.8px;line-height:11.8px;color:#111;-webkit-text-stroke:0.15px #111;right:298.33px;">$690,253</div>
<div class="t " style="top:657.38px;font-size:11.8px;line-height:11.8px;color:#111;-webkit-text-stroke:0.15px #111;right:205.00px;">$731,248</div>
<div class="t " style="top:657.38px;font-size:11.8px;line-height:11.8px;color:#111;-webkit-text-stroke:0.15px #111;right:111.67px;">$780,507</div>
<div class="t " style="top:657.38px;font-size:11.8px;line-height:11.8px;color:#111;-webkit-text-stroke:0.15px #111;right:18.33px;">$854,729</div>
<div class="r" style="left:24px;top:213.5px;width:22px;height:24.5px;background:transparent;border:2px solid #1f7040;box-sizing:border-box;"></div>
<div class="r" style="left:42px;top:234.5px;width:5.5px;height:5.5px;background:#1f7040;border:1px solid #fff;box-sizing:content-box;left:41px;top:233.5px;"></div>
<div class="r" style="left:0px;top:946px;width:1600px;height:28px;background:#333333;"></div>
<div class="r" style="left:0px;top:946px;width:66.5px;height:28px;background:#3a3a3a;"></div>
<div class="r" style="left:66.5px;top:947px;width:1.2px;height:26px;background:#4a4a4a;"></div>
<svg class="s" style="left:16px;top:955px" width="10" height="13" viewBox="0 0 10 13"><path d="M9 0.5 V12.5 L0.5 6.5 Z" fill="#5e5e5e"/></svg>
<svg class="s" style="left:41.5px;top:955px" width="10" height="13" viewBox="0 0 10 13"><path d="M1 0.5 V12.5 L9.5 6.5 Z" fill="#5e5e5e"/></svg>
<div class="r" style="left:71px;top:948.6px;width:104px;height:22.5px;background:#0f1f3f;"></div>
<div class="t " style="top:953.57px;font-size:13.5px;line-height:13.5px;color:#ffffff;letter-spacing:0.264px;-webkit-text-stroke:0.35px #ffffff;left:86.40px;">Instructions</div>
<div class="r" style="left:182px;top:948.6px;width:112.39999999999998px;height:22.5px;background:#4fb1d8;"></div>
<div class="t " style="top:953.57px;font-size:13.5px;line-height:13.5px;color:#101010;letter-spacing:0.247px;-webkit-text-stroke:0.35px #101010;left:198.00px;">Assumptions</div>
<div class="r" style="left:302px;top:948.6px;width:149px;height:22.5px;background:#63c278;"></div>
<div class="t " style="top:953.57px;font-size:13.5px;line-height:13.5px;color:#101010;letter-spacing:0.121px;-webkit-text-stroke:0.35px #101010;left:319.60px;">Inventory Planning</div>
<div class="r" style="left:563px;top:948.6px;width:180px;height:22.5px;background:#9457b2;"></div>
<div class="t " style="top:953.57px;font-size:13.5px;line-height:13.5px;color:#ffffff;letter-spacing:0.140px;-webkit-text-stroke:0.35px #ffffff;left:581.00px;">Cash Conversion Cycle</div>
<div class="r" style="left:751px;top:948.6px;width:98px;height:22.5px;background:#0f1f3f;"></div>
<div class="t " style="top:953.57px;font-size:13.5px;line-height:13.5px;color:#ffffff;letter-spacing:0.062px;-webkit-text-stroke:0.35px #ffffff;left:766.40px;">Dashboard</div>
<div class="r" style="left:177.5px;top:947.5px;width:1.5px;height:23px;background:#595959;"></div>
<div class="r" style="left:297.6px;top:947.5px;width:1.5px;height:23px;background:#595959;"></div>
<div class="r" style="left:747px;top:947.5px;width:1.5px;height:23px;background:#595959;"></div>
<div class="r" style="left:852.5px;top:947.5px;width:1.5px;height:23px;background:#595959;"></div>
<div class="r" style="left:894.5px;top:947.5px;width:1.5px;height:23px;background:#595959;"></div>
<div class="r" style="left:456px;top:946px;width:103px;height:24.5px;background:#ffffff;border-radius:0 0 3px 3px;"></div>
<div class="r" style="left:459px;top:949px;width:96px;height:18.6px;background:linear-gradient(#fbefe6,#efc7a8);"></div>
<div class="t " style="top:953.57px;font-size:13.5px;line-height:13.5px;color:#3d7a48;letter-spacing:0.203px;-webkit-text-stroke:0.35px #3d7a48;left:474.40px;">Cash Flow</div>
<div class="r" style="left:868.5px;top:959px;width:11.5px;height:2px;background:#d0d0d0;"></div>
<div class="r" style="left:873.2px;top:954.3px;width:2px;height:11.5px;background:#d0d0d0;"></div>
<div class="r" style="left:0px;top:974px;width:1600px;height:26px;background:linear-gradient(#4a4a4a,#3c3c3c);"></div>
<div class="r" style="left:0px;top:973.5px;width:1600px;height:1px;background:#222222;"></div>
<div class="t " style="top:980.87px;font-size:13.5px;line-height:13.5px;color:#e6e6e6;letter-spacing:0.297px;-webkit-text-stroke:0.2px #e6e6e6;left:27.00px;">Listo</div>
<svg class="s" style="left:78px;top:977px" width="19" height="20" viewBox="0 0 19 20"><circle cx="8.5" cy="3.6" r="2.2" fill="#464646" stroke="#e0e0e0" stroke-width="1.2"/><path d="M3 6 Q8.5 9.5 14 6 M8.5 8.5 V12 L6 17 M8.5 12 L10.5 13.5" fill="none" stroke="#e0e0e0" stroke-width="3.6" stroke-linecap="round" stroke-linejoin="round"/><path d="M3 6 Q8.5 9.5 14 6 M8.5 8.5 V12 L6 17 M8.5 12 L10.5 13.5" fill="none" stroke="#464646" stroke-width="1.3" stroke-linecap="round" stroke-linejoin="round"/><path d="M11 13 L16.8 18.6 M16.8 13 L11 18.6" stroke="#464646" stroke-width="3"/><path d="M11.2 13 L16.8 18.6 M16.8 13 L11.2 18.6" stroke="#e0e0e0" stroke-width="1.3"/></svg>
<div class="t " style="top:980.87px;font-size:13.5px;line-height:13.5px;color:#e6e6e6;letter-spacing:0.240px;-webkit-text-stroke:0.2px #e6e6e6;left:102.00px;">Accesibilidad: es necesario investigar</div>
<div class="r" style="left:1241px;top:974.5px;width:41px;height:25.5px;background:#4e4e4e;"></div>
<svg class="s" style="left:1253px;top:979px" width="17" height="17" viewBox="0 0 17 17"><rect x="1" y="1" width="14.5" height="14.5" rx="1.5" fill="none" stroke="#e0e0e0" stroke-width="1.3"/><path d="M5.8 1 V15.5 M10.7 1 V15.5 M1 5.8 H15.5 M1 10.7 H15.5" stroke="#e0e0e0" stroke-width="1.2"/></svg>
<svg class="s" style="left:1293px;top:979px" width="17" height="17" viewBox="0 0 17 17"><rect x="1" y="1" width="14.5" height="14.5" rx="1.5" fill="none" stroke="#e0e0e0" stroke-width="1.3"/><rect x="4.3" y="3.5" width="8" height="9.5" fill="none" stroke="#e0e0e0" stroke-width="1.1"/><path d="M6 6 H10.5 M6 8.3 H10.5 M6 10.6 H10.5" stroke="#e0e0e0" stroke-width="1"/></svg>
<svg class="s" style="left:1332px;top:979px" width="18" height="17" viewBox="0 0 18 17"><rect x="1" y="1" width="15.5" height="14.5" rx="1.5" fill="none" stroke="#e0e0e0" stroke-width="1.3"/><path d="M6.5 1 V9 H1 M11 1 V6" fill="none" stroke="#e0e0e0" stroke-width="1.3"/></svg>
<div class="r" style="left:1369px;top:986.3px;width:9.7px;height:2px;background:#e6e6e6;"></div>
<div class="r" style="left:1387px;top:985.5px;width:110.5px;height:3.6px;background:#7a7a7a;border-radius:2px;"></div>
<div class="r" style="left:1433.7px;top:978.5px;width:17px;height:17px;background:#a8a8a8;border-radius:50%;"></div>
<div class="r" style="left:1505.6px;top:986.3px;width:9.6px;height:2px;background:#e6e6e6;"></div>
<div class="r" style="left:1509.4px;top:982.5px;width:2px;height:9.6px;background:#e6e6e6;"></div>
<div class="t " style="top:980.87px;font-size:13.5px;line-height:13.5px;color:#e6e6e6;letter-spacing:0.004px;-webkit-text-stroke:0.2px #e6e6e6;left:1533.70px;">100 %</div>
</body></html>
